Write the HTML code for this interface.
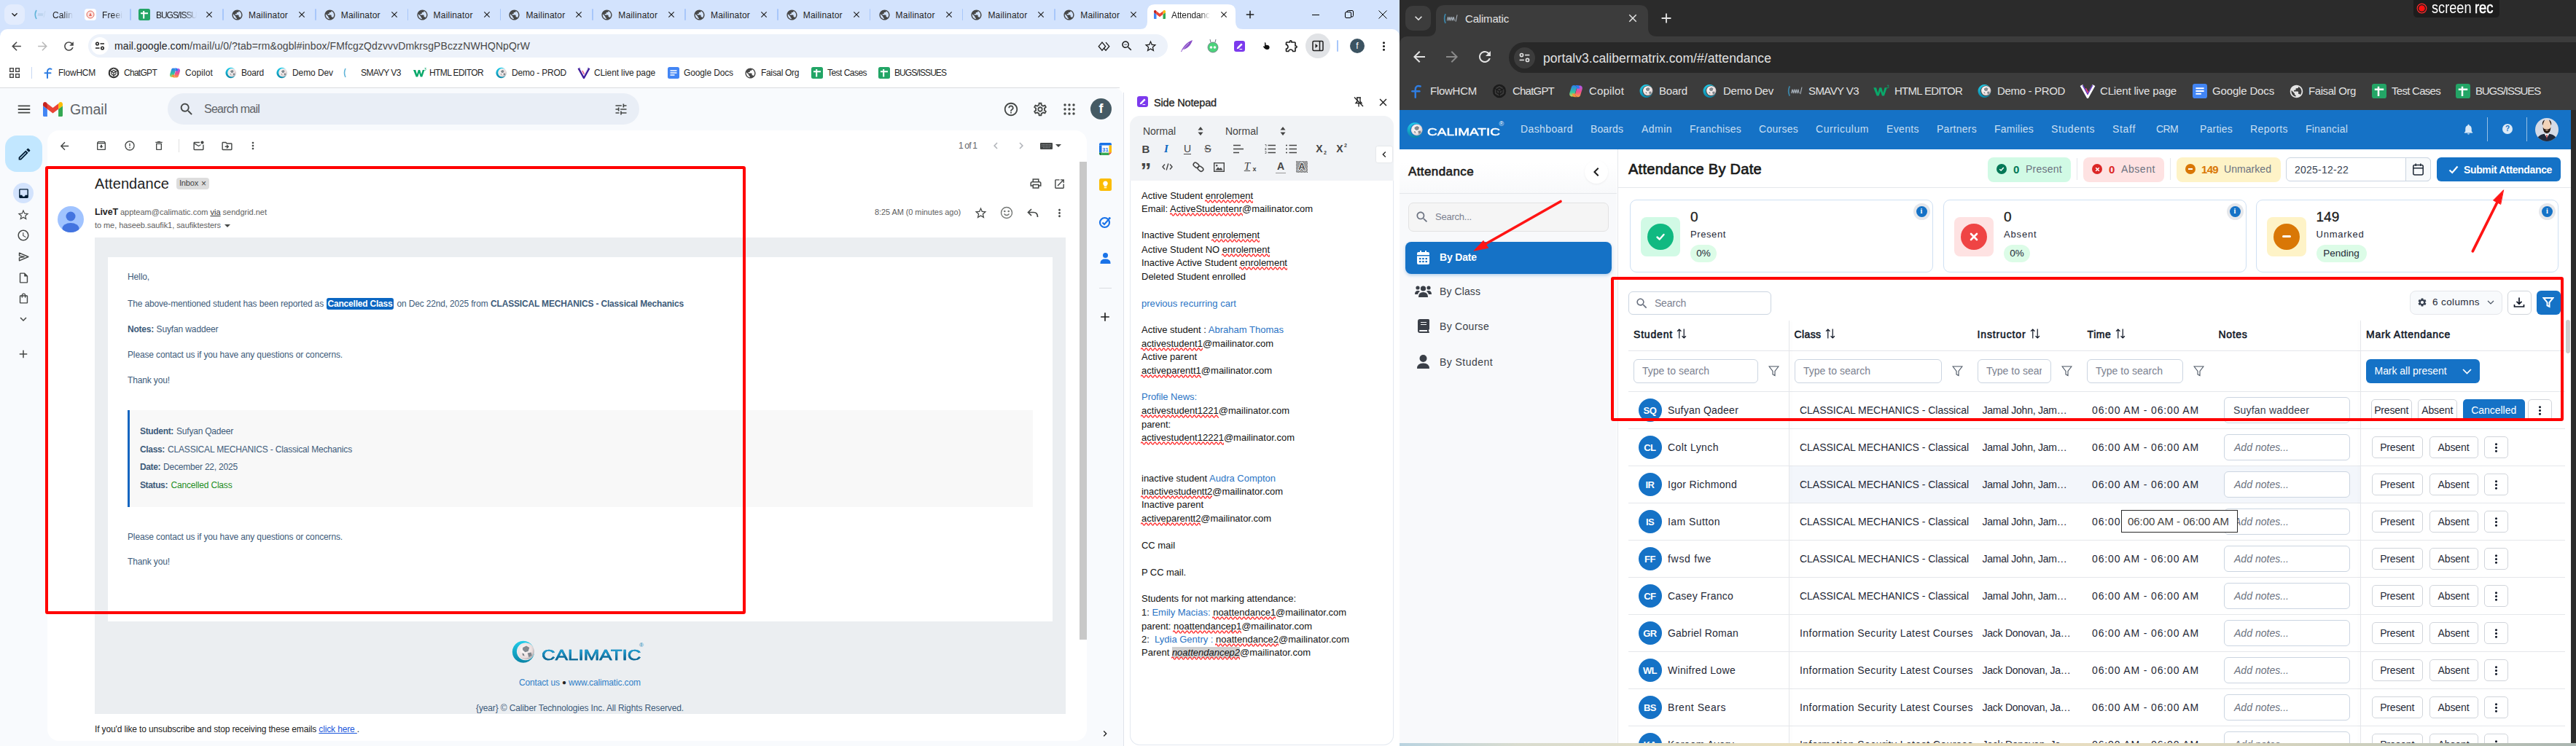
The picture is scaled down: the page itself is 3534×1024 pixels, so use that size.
<!DOCTYPE html>
<html lang="en"><head><meta charset="utf-8"><title>Attendance</title><style>html,body{margin:0;padding:0}body{width:3534px;height:1024px;overflow:hidden;position:relative;background:#fff;font-family:"Liberation Sans",sans-serif}
.t{position:absolute;white-space:pre;line-height:1}.b{position:absolute;display:block}</style></head><body>
<div class="b" style="left:0px;top:0px;width:1920px;height:52px;background:#d3e3fd;"></div>
<div class="b" style="left:6px;top:6px;width:28px;height:28px;background:#e3ecfd;border-radius:9px;"></div>
<svg class="b" style="left:12.0px;top:12.0px;" width="16" height="16" viewBox="0 0 24 24" fill="#1f1f1f"><path d="M16.59 8.59L12 13.17 7.41 8.59 6 10l6 6 6-6z"/></svg>
<svg class="b" style="left:46px;top:12px" width="18" height="16" viewBox="0 0 18 16"><path d="M4 2 Q0.5 8 4 14" stroke="#5fb4d8" stroke-width="1.6" fill="none"/><path d="M6 10 l1-4 1 4 1-4 1 4 1-4 1 4 1-4" stroke="#bcd3ee" stroke-width="1" fill="none"/><path d="M16 3 l-2 9" stroke="#c5d8ef" stroke-width="1"/></svg>
<span class="t" style="left:72.0px;top:14.8px;font-size:12px;color:#1f1f1f;letter-spacing:0.128px;-webkit-mask-image:linear-gradient(90deg,#000 55%,transparent 100%);">Calin</span>
<div class="b" style="left:116px;top:12px;width:16px;height:16px;background:#fff;border-radius:4px;"></div>
<svg class="b" style="left:118px;top:14px" width="12" height="12" viewBox="0 0 12 12"><circle cx="6" cy="6" r="5" fill="#fbe3df" stroke="#e2675a" stroke-width="1"/><path d="M4 8 L6 3.500 L8 8z" fill="#e2675a"/></svg>
<span class="t" style="left:140.0px;top:14.8px;font-size:12px;color:#1f1f1f;letter-spacing:0.131px;-webkit-mask-image:linear-gradient(90deg,#000 55%,transparent 100%);">Freei</span>
<div class="b" style="left:178.2px;top:12px;width:1.6px;height:16px;background:#a8c7fa;border-radius:1px;"></div>
<svg class="b" style="left:190.0px;top:12.0px" width="16" height="16" viewBox="0 0 16 16"><rect width="16" height="16" rx="2.500" fill="#23a566"/><path d="M3 6.200 H13 M7.200 3 V13.500" stroke="#fff" stroke-width="2"/></svg>
<span class="t" style="left:214.0px;top:14.8px;font-size:12px;color:#1f1f1f;letter-spacing:-1.040px;-webkit-mask-image:linear-gradient(90deg,#000 70%,transparent 100%);">BUGS/ISSU</span>
<svg class="b" style="left:280.0px;top:13.0px;" width="14" height="14" viewBox="0 0 24 24" fill="#1f1f1f"><path d="M19 6.41L17.59 5 12 10.59 6.41 5 5 6.41 10.59 12 5 17.59 6.41 19 12 13.41 17.59 19 19 17.59 13.41 12z"/></svg>
<div class="b" style="left:305.2px;top:12px;width:1.6px;height:16px;background:#a8c7fa;border-radius:1px;"></div>
<svg class="b" style="left:317.0px;top:11.5px;" width="17" height="17" viewBox="0 0 24 24" fill="#474747"><path d="M12 2C6.48 2 2 6.48 2 12s4.48 10 10 10 10-4.48 10-10S17.52 2 12 2zm-1 17.93c-3.95-.49-7-3.85-7-7.93 0-.62.08-1.21.21-1.79L9 15v1c0 1.1.9 2 2 2v1.93zm6.9-2.54c-.26-.81-1-1.39-1.9-1.39h-1v-3c0-.55-.45-1-1-1H8v-2h2c.55 0 1-.45 1-1V7h2c1.1 0 2-.9 2-2v-.41c2.93 1.19 5 4.06 5 7.41 0 2.08-.8 3.97-2.1 5.39z"/></svg>
<span class="t" style="left:341.0px;top:14.8px;font-size:12px;color:#1f1f1f;letter-spacing:0.197px;">Mailinator</span>
<svg class="b" style="left:407.0px;top:13.0px;" width="14" height="14" viewBox="0 0 24 24" fill="#1f1f1f"><path d="M19 6.41L17.59 5 12 10.59 6.41 5 5 6.41 10.59 12 5 17.59 6.41 19 12 13.41 17.59 19 19 17.59 13.41 12z"/></svg>
<div class="b" style="left:432.0px;top:12px;width:1.6px;height:16px;background:#a8c7fa;border-radius:1px;"></div>
<svg class="b" style="left:443.8px;top:11.5px;" width="17" height="17" viewBox="0 0 24 24" fill="#474747"><path d="M12 2C6.48 2 2 6.48 2 12s4.48 10 10 10 10-4.48 10-10S17.52 2 12 2zm-1 17.93c-3.95-.49-7-3.85-7-7.93 0-.62.08-1.21.21-1.79L9 15v1c0 1.1.9 2 2 2v1.93zm6.9-2.54c-.26-.81-1-1.39-1.9-1.39h-1v-3c0-.55-.45-1-1-1H8v-2h2c.55 0 1-.45 1-1V7h2c1.1 0 2-.9 2-2v-.41c2.93 1.19 5 4.06 5 7.41 0 2.08-.8 3.97-2.1 5.39z"/></svg>
<span class="t" style="left:467.8px;top:14.8px;font-size:12px;color:#1f1f1f;letter-spacing:0.197px;">Mailinator</span>
<svg class="b" style="left:533.8px;top:13.0px;" width="14" height="14" viewBox="0 0 24 24" fill="#1f1f1f"><path d="M19 6.41L17.59 5 12 10.59 6.41 5 5 6.41 10.59 12 5 17.59 6.41 19 12 13.41 17.59 19 19 17.59 13.41 12z"/></svg>
<div class="b" style="left:558.8000000000001px;top:12px;width:1.6px;height:16px;background:#a8c7fa;border-radius:1px;"></div>
<svg class="b" style="left:570.6px;top:11.5px;" width="17" height="17" viewBox="0 0 24 24" fill="#474747"><path d="M12 2C6.48 2 2 6.48 2 12s4.48 10 10 10 10-4.48 10-10S17.52 2 12 2zm-1 17.93c-3.95-.49-7-3.85-7-7.93 0-.62.08-1.21.21-1.79L9 15v1c0 1.1.9 2 2 2v1.93zm6.9-2.54c-.26-.81-1-1.39-1.9-1.39h-1v-3c0-.55-.45-1-1-1H8v-2h2c.55 0 1-.45 1-1V7h2c1.1 0 2-.9 2-2v-.41c2.93 1.19 5 4.06 5 7.41 0 2.08-.8 3.97-2.1 5.39z"/></svg>
<span class="t" style="left:594.6px;top:14.8px;font-size:12px;color:#1f1f1f;letter-spacing:0.197px;">Mailinator</span>
<svg class="b" style="left:660.6px;top:13.0px;" width="14" height="14" viewBox="0 0 24 24" fill="#1f1f1f"><path d="M19 6.41L17.59 5 12 10.59 6.41 5 5 6.41 10.59 12 5 17.59 6.41 19 12 13.41 17.59 19 19 17.59 13.41 12z"/></svg>
<div class="b" style="left:685.6px;top:12px;width:1.6px;height:16px;background:#a8c7fa;border-radius:1px;"></div>
<svg class="b" style="left:697.4px;top:11.5px;" width="17" height="17" viewBox="0 0 24 24" fill="#474747"><path d="M12 2C6.48 2 2 6.48 2 12s4.48 10 10 10 10-4.48 10-10S17.52 2 12 2zm-1 17.93c-3.95-.49-7-3.85-7-7.93 0-.62.08-1.21.21-1.79L9 15v1c0 1.1.9 2 2 2v1.93zm6.9-2.54c-.26-.81-1-1.39-1.9-1.39h-1v-3c0-.55-.45-1-1-1H8v-2h2c.55 0 1-.45 1-1V7h2c1.1 0 2-.9 2-2v-.41c2.93 1.19 5 4.06 5 7.41 0 2.08-.8 3.97-2.1 5.39z"/></svg>
<span class="t" style="left:721.4px;top:14.8px;font-size:12px;color:#1f1f1f;letter-spacing:0.197px;">Mailinator</span>
<svg class="b" style="left:787.4px;top:13.0px;" width="14" height="14" viewBox="0 0 24 24" fill="#1f1f1f"><path d="M19 6.41L17.59 5 12 10.59 6.41 5 5 6.41 10.59 12 5 17.59 6.41 19 12 13.41 17.59 19 19 17.59 13.41 12z"/></svg>
<div class="b" style="left:812.4000000000001px;top:12px;width:1.6px;height:16px;background:#a8c7fa;border-radius:1px;"></div>
<svg class="b" style="left:824.2px;top:11.5px;" width="17" height="17" viewBox="0 0 24 24" fill="#474747"><path d="M12 2C6.48 2 2 6.48 2 12s4.48 10 10 10 10-4.48 10-10S17.52 2 12 2zm-1 17.93c-3.95-.49-7-3.85-7-7.93 0-.62.08-1.21.21-1.79L9 15v1c0 1.1.9 2 2 2v1.93zm6.9-2.54c-.26-.81-1-1.39-1.9-1.39h-1v-3c0-.55-.45-1-1-1H8v-2h2c.55 0 1-.45 1-1V7h2c1.1 0 2-.9 2-2v-.41c2.93 1.19 5 4.06 5 7.41 0 2.08-.8 3.97-2.1 5.39z"/></svg>
<span class="t" style="left:848.2px;top:14.8px;font-size:12px;color:#1f1f1f;letter-spacing:0.197px;">Mailinator</span>
<svg class="b" style="left:914.2px;top:13.0px;" width="14" height="14" viewBox="0 0 24 24" fill="#1f1f1f"><path d="M19 6.41L17.59 5 12 10.59 6.41 5 5 6.41 10.59 12 5 17.59 6.41 19 12 13.41 17.59 19 19 17.59 13.41 12z"/></svg>
<div class="b" style="left:939.2px;top:12px;width:1.6px;height:16px;background:#a8c7fa;border-radius:1px;"></div>
<svg class="b" style="left:951.0px;top:11.5px;" width="17" height="17" viewBox="0 0 24 24" fill="#474747"><path d="M12 2C6.48 2 2 6.48 2 12s4.48 10 10 10 10-4.48 10-10S17.52 2 12 2zm-1 17.93c-3.95-.49-7-3.85-7-7.93 0-.62.08-1.21.21-1.79L9 15v1c0 1.1.9 2 2 2v1.93zm6.9-2.54c-.26-.81-1-1.39-1.9-1.39h-1v-3c0-.55-.45-1-1-1H8v-2h2c.55 0 1-.45 1-1V7h2c1.1 0 2-.9 2-2v-.41c2.93 1.19 5 4.06 5 7.41 0 2.08-.8 3.97-2.1 5.39z"/></svg>
<span class="t" style="left:975.0px;top:14.8px;font-size:12px;color:#1f1f1f;letter-spacing:0.197px;">Mailinator</span>
<svg class="b" style="left:1041.0px;top:13.0px;" width="14" height="14" viewBox="0 0 24 24" fill="#1f1f1f"><path d="M19 6.41L17.59 5 12 10.59 6.41 5 5 6.41 10.59 12 5 17.59 6.41 19 12 13.41 17.59 19 19 17.59 13.41 12z"/></svg>
<div class="b" style="left:1066.0px;top:12px;width:1.6px;height:16px;background:#a8c7fa;border-radius:1px;"></div>
<svg class="b" style="left:1077.8px;top:11.5px;" width="17" height="17" viewBox="0 0 24 24" fill="#474747"><path d="M12 2C6.48 2 2 6.48 2 12s4.48 10 10 10 10-4.48 10-10S17.52 2 12 2zm-1 17.93c-3.95-.49-7-3.85-7-7.93 0-.62.08-1.21.21-1.79L9 15v1c0 1.1.9 2 2 2v1.93zm6.9-2.54c-.26-.81-1-1.39-1.9-1.39h-1v-3c0-.55-.45-1-1-1H8v-2h2c.55 0 1-.45 1-1V7h2c1.1 0 2-.9 2-2v-.41c2.93 1.19 5 4.06 5 7.41 0 2.08-.8 3.97-2.1 5.39z"/></svg>
<span class="t" style="left:1101.8px;top:14.8px;font-size:12px;color:#1f1f1f;letter-spacing:0.197px;">Mailinator</span>
<svg class="b" style="left:1167.8px;top:13.0px;" width="14" height="14" viewBox="0 0 24 24" fill="#1f1f1f"><path d="M19 6.41L17.59 5 12 10.59 6.41 5 5 6.41 10.59 12 5 17.59 6.41 19 12 13.41 17.59 19 19 17.59 13.41 12z"/></svg>
<div class="b" style="left:1192.8px;top:12px;width:1.6px;height:16px;background:#a8c7fa;border-radius:1px;"></div>
<svg class="b" style="left:1204.6px;top:11.5px;" width="17" height="17" viewBox="0 0 24 24" fill="#474747"><path d="M12 2C6.48 2 2 6.48 2 12s4.48 10 10 10 10-4.48 10-10S17.52 2 12 2zm-1 17.93c-3.95-.49-7-3.85-7-7.93 0-.62.08-1.21.21-1.79L9 15v1c0 1.1.9 2 2 2v1.93zm6.9-2.54c-.26-.81-1-1.39-1.9-1.39h-1v-3c0-.55-.45-1-1-1H8v-2h2c.55 0 1-.45 1-1V7h2c1.1 0 2-.9 2-2v-.41c2.93 1.19 5 4.06 5 7.41 0 2.08-.8 3.97-2.1 5.39z"/></svg>
<span class="t" style="left:1228.6px;top:14.8px;font-size:12px;color:#1f1f1f;letter-spacing:0.197px;">Mailinator</span>
<svg class="b" style="left:1294.6px;top:13.0px;" width="14" height="14" viewBox="0 0 24 24" fill="#1f1f1f"><path d="M19 6.41L17.59 5 12 10.59 6.41 5 5 6.41 10.59 12 5 17.59 6.41 19 12 13.41 17.59 19 19 17.59 13.41 12z"/></svg>
<div class="b" style="left:1319.6000000000001px;top:12px;width:1.6px;height:16px;background:#a8c7fa;border-radius:1px;"></div>
<svg class="b" style="left:1331.4px;top:11.5px;" width="17" height="17" viewBox="0 0 24 24" fill="#474747"><path d="M12 2C6.48 2 2 6.48 2 12s4.48 10 10 10 10-4.48 10-10S17.52 2 12 2zm-1 17.93c-3.95-.49-7-3.85-7-7.93 0-.62.08-1.21.21-1.79L9 15v1c0 1.1.9 2 2 2v1.93zm6.9-2.54c-.26-.81-1-1.39-1.9-1.39h-1v-3c0-.55-.45-1-1-1H8v-2h2c.55 0 1-.45 1-1V7h2c1.1 0 2-.9 2-2v-.41c2.93 1.19 5 4.06 5 7.41 0 2.08-.8 3.97-2.1 5.39z"/></svg>
<span class="t" style="left:1355.4px;top:14.8px;font-size:12px;color:#1f1f1f;letter-spacing:0.197px;">Mailinator</span>
<svg class="b" style="left:1421.4px;top:13.0px;" width="14" height="14" viewBox="0 0 24 24" fill="#1f1f1f"><path d="M19 6.41L17.59 5 12 10.59 6.41 5 5 6.41 10.59 12 5 17.59 6.41 19 12 13.41 17.59 19 19 17.59 13.41 12z"/></svg>
<div class="b" style="left:1446.4px;top:12px;width:1.6px;height:16px;background:#a8c7fa;border-radius:1px;"></div>
<svg class="b" style="left:1458.2px;top:11.5px;" width="17" height="17" viewBox="0 0 24 24" fill="#474747"><path d="M12 2C6.48 2 2 6.48 2 12s4.48 10 10 10 10-4.48 10-10S17.52 2 12 2zm-1 17.93c-3.95-.49-7-3.85-7-7.93 0-.62.08-1.21.21-1.79L9 15v1c0 1.1.9 2 2 2v1.93zm6.9-2.54c-.26-.81-1-1.39-1.9-1.39h-1v-3c0-.55-.45-1-1-1H8v-2h2c.55 0 1-.45 1-1V7h2c1.1 0 2-.9 2-2v-.41c2.93 1.19 5 4.06 5 7.41 0 2.08-.8 3.97-2.1 5.39z"/></svg>
<span class="t" style="left:1482.2px;top:14.8px;font-size:12px;color:#1f1f1f;letter-spacing:0.197px;">Mailinator</span>
<svg class="b" style="left:1548.2px;top:13.0px;" width="14" height="14" viewBox="0 0 24 24" fill="#1f1f1f"><path d="M19 6.41L17.59 5 12 10.59 6.41 5 5 6.41 10.59 12 5 17.59 6.41 19 12 13.41 17.59 19 19 17.59 13.41 12z"/></svg>
<svg class="b" style="left:1564px;top:6px" width="142" height="34" viewBox="0 0 142 34"><path d="M0 34 Q10 34 10 24 V10 Q10 0 20 0 H121 Q131 0 131 10 V24 Q131 34 141 34 Z" fill="#fff"/></svg>
<svg class="b" style="left:1583.0px;top:14.0px" width="16" height="12.0" viewBox="0 0 32 24"><path d="M2 24h5V11.500L0 6.200V22c0 1.100.9 2 2 2z" fill="#4285f4"/><path d="M25 24h5c1.100 0 2-.9 2-2V6.200l-7 5.300z" fill="#34a853"/><path d="M25 2.700v8.800l7-5.300V3.300c0-2.700-3.100-4.200-5.200-2.600z" fill="#fbbc04"/><path d="M7 11.500V2.700l9 6.800 9-6.800v8.800l-9 6.800z" fill="#ea4335"/><path d="M0 3.300v2.900l7 5.300V2.700L5.200.7C3.100-.9 0 .6 0 3.300z" fill="#c5221f"/></svg>
<span class="t" style="left:1607.0px;top:14.8px;font-size:12px;color:#1f1f1f;letter-spacing:-0.116px;-webkit-mask-image:linear-gradient(90deg,#000 75%,transparent 100%);">Attendanc</span>
<svg class="b" style="left:1672.0px;top:13.0px;" width="14" height="14" viewBox="0 0 24 24" fill="#1f1f1f"><path d="M19 6.41L17.59 5 12 10.59 6.41 5 5 6.41 10.59 12 5 17.59 6.41 19 12 13.41 17.59 19 19 17.59 13.41 12z"/></svg>
<svg class="b" style="left:1706.0px;top:11.0px;" width="18" height="18" viewBox="0 0 24 24" fill="#1f1f1f"><path d="M19 13h-6v6h-2v-6H5v-2h6V5h2v6h6v2z"/></svg>
<div class="b" style="left:1800px;top:19.5px;width:10px;height:1px;background:#000;"></div>
<svg class="b" style="left:1845px;top:14px" width="12" height="12" viewBox="0 0 12 12" fill="none" stroke="#000" stroke-width="1"><rect x="0.5" y="2.5" width="8" height="8" rx="1.500"/><path d="M3 2.500 V2 Q3 0.500 4.500 0.500 H10 Q11.500 0.500 11.500 2 V7.500 Q11.500 9 10 9 H9"/></svg>
<svg class="b" style="left:1891px;top:14px" width="12" height="12" viewBox="0 0 12 12" fill="none" stroke="#000" stroke-width="1"><path d="M0.500 0.500 L11.500 11.500 M11.500 0.500 L0.500 11.500"/></svg>
<div class="b" style="left:0px;top:40px;width:1920px;height:47px;background:#fff;border-radius:10px 10px 0 0;"></div>
<svg class="b" style="left:12.5px;top:53.5px;" width="19" height="19" viewBox="0 0 24 24" fill="#474747"><path d="M20 11H7.83l5.59-5.59L12 4l-8 8 8 8 1.41-1.41L7.83 13H20v-2z"/></svg>
<svg class="b" style="left:48.5px;top:53.5px;" width="19" height="19" viewBox="0 0 24 24" fill="#b9b9b9"><path d="M12 4l-1.41 1.41L16.17 11H4v2h12.17l-5.58 5.59L12 20l8-8z"/></svg>
<svg class="b" style="left:84.5px;top:53.5px;" width="19" height="19" viewBox="0 0 24 24" fill="#474747"><path d="M17.65 6.35C16.2 4.9 14.21 4 12 4c-4.42 0-7.99 3.58-7.99 8s3.57 8 7.99 8c3.73 0 6.84-2.55 7.73-6h-2.08c-.82 2.33-3.04 4-5.65 4-3.31 0-6-2.69-6-6s2.69-6 6-6c1.66 0 3.14.69 4.22 1.78L13 11h7V4l-2.35 2.35z"/></svg>
<div class="b" style="left:121px;top:47px;width:1481px;height:32px;background:#edf2fa;border-radius:16px;"></div>
<div class="b" style="left:125px;top:51px;width:24px;height:24px;background:#fff;border-radius:12px;"></div>
<svg class="b" style="left:130px;top:56px" width="14" height="14" viewBox="0 0 14 14" fill="none" stroke="#1f1f1f" stroke-width="1.500"><circle cx="3.500" cy="4" r="1.800"/><path d="M7.500 4 H13"/><circle cx="10.500" cy="10" r="1.800"/><path d="M1 10 H6.500"/></svg>
<span class="t" style="left:157.0px;top:56.1px;font-size:14px;color:#474747;letter-spacing:0.094px;"><span style="color:#1f1f1f">mail.google.com</span>/mail/u/0/?tab=rm&amp;ogbl#inbox/FMfcgzQdzvvvDmkrsgPBczzNWHQNpQrW</span>
<svg class="b" style="left:1505.500px;top:55.500px" width="17" height="15.300" viewBox="0 0 20 18" fill="none" stroke="#1f1f1f" stroke-width="1.600"><path d="M7 2.500 L1.500 9 L7 15.500 L12.500 9z"/><path d="M13 2.500 L18.500 9 L13 15.500 L10 12"/></svg>
<svg class="b" style="left:1537.0px;top:54.0px;" width="18" height="18" viewBox="0 0 24 24" fill="#1f1f1f"><path d="M15.5 14h-.79l-.28-.27C15.410 12.590 16 11.110 16 9.500 16 5.910 13.090 3 9.500 3S3 5.910 3 9.500 5.910 16 9.500 16c1.610 0 3.090-.590 4.230-1.570l.270.280v.790l5 4.990L20.490 19l-4.990-5zm-6 0C7.010 14 5 11.990 5 9.500S7.010 5 9.500 5 14 7.010 14 9.500 11.990 14 9.500 14zM7 9h5v1H7z"/></svg>
<svg class="b" style="left:1568.5px;top:53.5px;" width="19" height="19" viewBox="0 0 24 24" fill="#1f1f1f"><path d="M22 9.24l-7.19-.62L12 2 9.19 8.63 2 9.24l5.46 4.73L5.82 21 12 17.27 18.18 21l-1.63-7.03L22 9.24zM12 15.4l-3.76 2.27 1-4.28-3.32-2.88 4.38-.38L12 6.1l1.71 4.04 4.38.38-3.32 2.88 1 4.28L12 15.4z"/></svg>
<svg class="b" style="left:1619px;top:54px" width="18" height="18" viewBox="0 0 18 18"><path d="M1 17 C4 10 9 4 17 1 C15 8 10 13 4 14 L2 17z" fill="#8a4fc7"/><path d="M2 16 L12 5" stroke="#d8c2f0" stroke-width=".8"/></svg>
<svg class="b" style="left:1655px;top:53px" width="18" height="20" viewBox="0 0 18 20"><circle cx="9" cy="12" r="7" fill="#4bd37b" stroke="#6b7280" stroke-width=".8"/><circle cx="6.500" cy="12" r="1.800" fill="#fff"/><circle cx="11.500" cy="12" r="1.800" fill="#fff"/><path d="M6 5 L5 1 M12 5 L13 1" stroke="#6b7280" stroke-width="1"/></svg>
<svg class="b" style="left:1692.5px;top:55.5px" width="15" height="15" viewBox="0 0 16 16"><rect width="16" height="16" rx="3.500" fill="#7c3aed"/><path d="M4 12 L4.600 9.500 L10.500 3.600 L12.400 5.500 L6.500 11.400z" fill="#fff"/><path d="M8 12.300 H12" stroke="#fff" stroke-width="1.200"/></svg>
<div class="b" style="left:1728px;top:54px;width:18px;height:18px;background:#fff;border-radius:9px;"></div>
<svg class="b" style="left:1732px;top:57px" width="11" height="12" viewBox="0 0 11 12"><path d="M3 1 C4 1 4.500 2 4.500 3 V5 C6 4.500 9 5 9.500 7 C10 9 9 11 6.500 11 C4 11 2 9 1 7 C1 6 2.500 6 3 7 Z" fill="#111"/></svg>
<svg class="b" style="left:1762.0px;top:53.0px;" width="20" height="20" viewBox="0 0 24 24" fill="#1f1f1f"><path d="M10.5 4.5c.28 0 .5.22.5.5v2h6v6h2c.28 0 .5.22.5.5s-.22.5-.5.5h-2v6h-2.120c-.680-1.750-2.390-3-4.380-3s-3.700 1.250-4.380 3H4v-2.120c1.750-.680 3-2.390 3-4.380 0-1.990-1.240-3.700-2.990-4.380L4 7h6V5c0-.280.220-.500.500-.500m0-2C9.120 2.500 8 3.620 8 5H4c-1.100 0-1.990.9-1.990 2v3.800h.290c1.490 0 2.700 1.210 2.700 2.700s-1.210 2.700-2.700 2.700H2V20c0 1.100.9 2 2 2h3.800v-.300c0-1.490 1.210-2.700 2.700-2.700s2.700 1.210 2.700 2.700v.300H17c1.100 0 2-.9 2-2v-4c1.380 0 2.500-1.120 2.500-2.500S20.380 11 19 11V7c0-1.100-.9-2-2-2h-4c0-1.380-1.120-2.500-2.500-2.500z"/></svg>
<div class="b" style="left:1791px;top:46px;width:34px;height:34px;background:#e1e3e6;border-radius:17px;"></div>
<svg class="b" style="left:1800px;top:55px" width="16" height="16" viewBox="0 0 16 16" fill="none" stroke="#1f1f1f" stroke-width="1.500"><rect x="1" y="1.500" width="14" height="13" rx="1.500"/><path d="M10.500 1.500 V14.500"/><path d="M4.500 5 L8 8 L4.500 11z" fill="#1f1f1f" stroke="none"/></svg>
<div class="b" style="left:1834.2px;top:55px;width:1.6px;height:16px;background:#a8c7fa;border-radius:1px;"></div>
<div class="b" style="left:1852px;top:53px;width:20px;height:20px;background:#3b5361;border-radius:10px;"></div>
<span class="t" style="left:1860.3px;top:57.1px;font-size:12px;color:#fff;">f</span>
<svg class="b" style="left:1888.5px;top:53.5px;" width="19" height="19" viewBox="0 0 24 24" fill="#1f1f1f"><path d="M12 8c1.1 0 2-.9 2-2s-.9-2-2-2-2 .9-2 2 .9 2 2 2zm0 2c-1.1 0-2 .9-2 2s.9 2 2 2 2-.9 2-2-.9-2-2-2zm0 6c-1.1 0-2 .9-2 2s.9 2 2 2 2-.9 2-2-.9-2-2-2z"/></svg>
<div class="b" style="left:0px;top:87px;width:1920px;height:33px;background:#fff;"></div>
<div class="b" style="left:0px;top:120px;width:1536px;height:1px;background:#dadce0;"></div>
<svg class="b" style="left:13px;top:93px" width="14" height="14" viewBox="0 0 14 14" fill="none" stroke="#444" stroke-width="1.400"><rect x=".7" y=".7" width="4.600" height="4.600"/><rect x="8.700" y=".7" width="4.600" height="4.600"/><rect x=".7" y="8.700" width="4.600" height="4.600"/><rect x="8.700" y="8.700" width="4.600" height="4.600"/></svg>
<div class="b" style="left:42.5px;top:92px;width:1.3px;height:16px;background:#c7d7f3;"></div>
<svg class="b" style="left:58.0px;top:92.0px" width="16" height="16" viewBox="0 0 16 16" fill="none" stroke="#2f7de1" stroke-width="2" stroke-linecap="round"><path d="M12.500 2.800 C9.500 1.500 7 3 7 6.500 V15"/><path d="M3.500 8.200 H11.500"/></svg>
<span class="t" style="left:80.0px;top:94.1px;font-size:12px;color:#1f1f1f;letter-spacing:-0.239px;">FlowHCM</span>
<svg class="b" style="left:148.0px;top:92.0px" width="16" height="16" viewBox="0 0 16 16" fill="none" stroke="#2b2b2b" stroke-width="1.100"><circle cx="8" cy="8" r="6.800"/><path d="M8 1.500 L13.500 4.800 V11.200 L8 14.500 L2.500 11.200 V4.800z"/><path d="M8 4.500 L11 6.300 V9.700 L8 11.500 L5 9.700 V6.300z"/><path d="M2.500 4.800 L8 8 M13.500 4.800 L8 8 M8 14.500 V8"/></svg>
<span class="t" style="left:170.0px;top:94.1px;font-size:12px;color:#1f1f1f;letter-spacing:-0.717px;">ChatGPT</span>
<svg class="b" style="left:232.0px;top:92.0px" width="16" height="16" viewBox="0 0 16 16"><defs><linearGradient id="cpa240" x1="0" y1="0" x2="0" y2="1"><stop offset="0" stop-color="#2b7df0"/><stop offset=".6" stop-color="#33c1a0"/><stop offset="1" stop-color="#d3d84a"/></linearGradient><linearGradient id="cpb240" x1="0" y1="0" x2="0" y2="1"><stop offset="0" stop-color="#a45cf5"/><stop offset=".55" stop-color="#f0508a"/><stop offset="1" stop-color="#f9a040"/></linearGradient></defs><path d="M5.500 1.500 c-1.200 0-2 .800-2.400 2 l-2 6.500 c-.600 2 .400 4 2.400 4 h2.500 l3-9.800 c-.400-1.500-1.200-2.700-3.500-2.700z" fill="url(#cpa240)"/><path d="M10.500 14.500 c1.200 0 2-.800 2.400-2 l2-6.500 c.600-2-.400-4-2.400-4 h-2.500 l-3 9.800 c.400 1.500 1.200 2.700 3.500 2.700z" fill="url(#cpb240)"/><path d="M5.500 1.500 h4 c1.200 0 1.800 .700 2.100 1.700 l.600 2 h-3 l-.600-2 c-.300-1-.900-1.700-3.100-1.700z" fill="#2b7df0"/><path d="M10.500 14.500 h-4 c-1.200 0-1.800-.700-2.100-1.700 l-.600-2 h3 l.600 2 c.300 1 .900 1.700 3.100 1.700z" fill="#f7903c"/></svg>
<span class="t" style="left:254.0px;top:94.1px;font-size:12px;color:#1f1f1f;letter-spacing:0.092px;">Copilot</span>
<svg class="b" style="left:308.5px;top:92.0px" width="16" height="16" viewBox="0 0 20 20"><defs><linearGradient id="cgc9" x1="0" y1="0" x2="0" y2="1"><stop offset="0" stop-color="#22cdea"/><stop offset="1" stop-color="#0a84a6"/></linearGradient><radialGradient id="cgs9" cx=".4" cy=".4" r=".7"><stop offset="0" stop-color="#ffffff"/><stop offset=".7" stop-color="#e9dcdc"/><stop offset="1" stop-color="#8d9399"/></radialGradient></defs><path fill-rule="evenodd" d="M9.500 1 a9 9 0 1 0 0.001 0z M11.300 2.500 a7.200 7.200 0 1 1 -0.001 0z" fill="url(#cgc9)"/><path d="M13 1.800 A9 9 0 0 1 18.400 8 L20 10 L18.400 13 A9 9 0 0 1 15 17.200 L20 20 L20 0z" fill="none"/><circle cx="11.700" cy="9.600" r="6.700" fill="url(#cgs9)"/><path d="M9 6.500 l3-1.500 2.500 1.500 -1 3 -2.500 .800 -2-1.800z M13 11 l3-.500 .500 2.500 -2.500 1.500z M8.500 11 l1.500 .500 .500 2 -1.500-.500z" fill="#6d747b" opacity=".85"/></svg>
<span class="t" style="left:331.0px;top:94.1px;font-size:12px;color:#1f1f1f;letter-spacing:-0.206px;">Board</span>
<svg class="b" style="left:378.5px;top:92.0px" width="16" height="16" viewBox="0 0 20 20"><defs><linearGradient id="cgc10" x1="0" y1="0" x2="0" y2="1"><stop offset="0" stop-color="#22cdea"/><stop offset="1" stop-color="#0a84a6"/></linearGradient><radialGradient id="cgs10" cx=".4" cy=".4" r=".7"><stop offset="0" stop-color="#ffffff"/><stop offset=".7" stop-color="#e9dcdc"/><stop offset="1" stop-color="#8d9399"/></radialGradient></defs><path fill-rule="evenodd" d="M9.500 1 a9 9 0 1 0 0.001 0z M11.300 2.500 a7.200 7.200 0 1 1 -0.001 0z" fill="url(#cgc10)"/><path d="M13 1.800 A9 9 0 0 1 18.400 8 L20 10 L18.400 13 A9 9 0 0 1 15 17.200 L20 20 L20 0z" fill="none"/><circle cx="11.700" cy="9.600" r="6.700" fill="url(#cgs10)"/><path d="M9 6.500 l3-1.500 2.500 1.500 -1 3 -2.500 .800 -2-1.800z M13 11 l3-.500 .500 2.500 -2.500 1.500z M8.500 11 l1.500 .500 .500 2 -1.500-.500z" fill="#6d747b" opacity=".85"/></svg>
<span class="t" style="left:401.0px;top:94.1px;font-size:12px;color:#1f1f1f;letter-spacing:-0.086px;">Demo Dev</span>
<svg class="b" style="left:467.0px;top:92.0px" width="16" height="16" viewBox="0 0 16 16"><path d="M7 2 Q4 8 7 14" stroke="#5fb4d8" stroke-width="1.600" fill="none"/></svg>
<span class="t" style="left:495.0px;top:94.1px;font-size:12px;color:#1f1f1f;letter-spacing:-0.490px;">SMAVY V3</span>
<svg class="b" style="left:566.0px;top:92.0px" width="20" height="16" viewBox="0 0 20 16"><path d="M1 4 H4.200 L6 10 L7.800 4 H10.200 L12 10 L13.800 4 H16.500 L13.300 13.500 H10.800 L9 8 L7.200 13.500 H4.700z" fill="#0aa86a"/><path d="M16.500 1.500 h2 l-1 1.200 c1.200 0 1.200 1.800-.2 1.800 c-.6 0-1-.3-1.100-.7" stroke="#0aa86a" stroke-width=".7" fill="none"/></svg>
<span class="t" style="left:589.0px;top:94.1px;font-size:12px;color:#1f1f1f;letter-spacing:-0.607px;">HTML EDITOR</span>
<svg class="b" style="left:679.5px;top:92.0px" width="16" height="16" viewBox="0 0 20 20"><defs><linearGradient id="cgc11" x1="0" y1="0" x2="0" y2="1"><stop offset="0" stop-color="#22cdea"/><stop offset="1" stop-color="#0a84a6"/></linearGradient><radialGradient id="cgs11" cx=".4" cy=".4" r=".7"><stop offset="0" stop-color="#ffffff"/><stop offset=".7" stop-color="#e9dcdc"/><stop offset="1" stop-color="#8d9399"/></radialGradient></defs><path fill-rule="evenodd" d="M9.500 1 a9 9 0 1 0 0.001 0z M11.300 2.500 a7.200 7.200 0 1 1 -0.001 0z" fill="url(#cgc11)"/><path d="M13 1.800 A9 9 0 0 1 18.400 8 L20 10 L18.400 13 A9 9 0 0 1 15 17.200 L20 20 L20 0z" fill="none"/><circle cx="11.700" cy="9.600" r="6.700" fill="url(#cgs11)"/><path d="M9 6.500 l3-1.500 2.500 1.500 -1 3 -2.500 .800 -2-1.800z M13 11 l3-.500 .500 2.500 -2.500 1.500z M8.500 11 l1.500 .500 .500 2 -1.500-.500z" fill="#6d747b" opacity=".85"/></svg>
<span class="t" style="left:702.0px;top:94.1px;font-size:12px;color:#1f1f1f;letter-spacing:-0.213px;">Demo - PROD</span>
<svg class="b" style="left:791.5px;top:92.0px" width="18" height="16" viewBox="0 0 18 16" fill="none"><path d="M2 1.500 L9 14 L16 1.500" stroke="#3f1d9b" stroke-width="3.400" stroke-linejoin="miter"/><path d="M3.500 1.500 L9 11.500 L14.500 1.500" stroke="#ffffff" stroke-width="1.100"/><path d="M7 5 L9.500 10" stroke="#ec407a" stroke-width="1.200"/></svg>
<span class="t" style="left:815.0px;top:94.1px;font-size:12px;color:#1f1f1f;letter-spacing:-0.129px;">CLient live page</span>
<svg class="b" style="left:916.0px;top:92.0px" width="16" height="16" viewBox="0 0 16 16"><rect width="16" height="16" rx="2.500" fill="#4285f4"/><path d="M3.500 5 H12.500 M3.500 8 H12.500 M3.500 11 H9.500" stroke="#fff" stroke-width="1.700"/></svg>
<span class="t" style="left:938.0px;top:94.1px;font-size:12px;color:#1f1f1f;letter-spacing:-0.125px;">Google Docs</span>
<svg class="b" style="left:1021.0px;top:91.5px" width="17" height="17" viewBox="0 0 24 24" fill="#474747"><path d="M12 2C6.48 2 2 6.48 2 12s4.48 10 10 10 10-4.48 10-10S17.52 2 12 2zm-1 17.93c-3.95-.49-7-3.85-7-7.93 0-.62.08-1.21.21-1.79L9 15v1c0 1.1.9 2 2 2v1.93zm6.9-2.54c-.26-.81-1-1.39-1.9-1.39h-1v-3c0-.55-.45-1-1-1H8v-2h2c.55 0 1-.45 1-1V7h2c1.1 0 2-.9 2-2v-.41c2.93 1.19 5 4.06 5 7.41 0 2.08-.8 3.97-2.1 5.39z"/></svg>
<span class="t" style="left:1044.0px;top:94.1px;font-size:12px;color:#1f1f1f;letter-spacing:-0.336px;">Faisal Org</span>
<svg class="b" style="left:1113.0px;top:92.0px" width="16" height="16" viewBox="0 0 16 16"><rect width="16" height="16" rx="2.500" fill="#23a566"/><path d="M3 6.200 H13 M7.200 3 V13.500" stroke="#fff" stroke-width="2"/></svg>
<span class="t" style="left:1135.0px;top:94.1px;font-size:12px;color:#1f1f1f;letter-spacing:-0.536px;">Test Cases</span>
<svg class="b" style="left:1205.0px;top:92.0px" width="16" height="16" viewBox="0 0 16 16"><rect width="16" height="16" rx="2.500" fill="#23a566"/><path d="M3 6.200 H13 M7.200 3 V13.500" stroke="#fff" stroke-width="2"/></svg>
<span class="t" style="left:1227.0px;top:94.1px;font-size:12px;color:#1f1f1f;letter-spacing:-0.942px;">BUGS/ISSUES</span>
<div class="b" style="left:0px;top:121px;width:1541px;height:903px;background:#f8fafd;border-radius:0 12px 0 0;"></div>
<div class="b" style="left:1541px;top:127px;width:1px;height:897px;background:#dfe3eb;"></div>
<div class="b" style="left:1542px;top:121px;width:378px;height:903px;background:#fff;"></div>
<svg class="b" style="left:21.5px;top:139.0px;" width="22" height="22" viewBox="0 0 24 24" fill="#444746"><path d="M3 18h18v-2H3v2zm0-5h18v-2H3v2zm0-7v2h18V6H3z"/></svg>
<svg class="b" style="left:59.0px;top:139.9px" width="27" height="20.25" viewBox="0 0 32 24"><path d="M2 24h5V11.500L0 6.200V22c0 1.100.9 2 2 2z" fill="#4285f4"/><path d="M25 24h5c1.100 0 2-.9 2-2V6.200l-7 5.300z" fill="#34a853"/><path d="M25 2.700v8.800l7-5.300V3.300c0-2.700-3.100-4.200-5.200-2.600z" fill="#fbbc04"/><path d="M7 11.500V2.700l9 6.800 9-6.800v8.800l-9 6.800z" fill="#ea4335"/><path d="M0 3.300v2.900l7 5.300V2.700L5.200.7C3.100-.9 0 .6 0 3.300z" fill="#c5221f"/></svg>
<span class="t" style="left:96.0px;top:140.7px;font-size:19.5px;color:#5f6368;letter-spacing:0.016px;">Gmail</span>
<div class="b" style="left:230px;top:128px;width:647px;height:43px;background:#e9eef6;border-radius:22px;"></div>
<svg class="b" style="left:244.5px;top:138.5px;" width="22" height="22" viewBox="0 0 24 24" fill="#444746"><path d="M15.5 14h-.79l-.28-.27C15.41 12.59 16 11.11 16 9.5 16 5.91 13.09 3 9.5 3S3 5.91 3 9.5 5.91 16 9.5 16c1.61 0 3.09-.59 4.23-1.57l.27.28v.79l5 4.99L20.49 19l-4.99-5zm-6 0C7.01 14 5 11.99 5 9.5S7.01 5 9.5 5 14 7.01 14 9.5 11.99 14 9.5 14z"/></svg>
<span class="t" style="left:280.0px;top:142.0px;font-size:16px;color:#5f6368;letter-spacing:-0.771px;">Search mail</span>
<svg class="b" style="left:842.0px;top:139.5px;" width="20" height="20" viewBox="0 0 24 24" fill="#444746"><path d="M3 17v2h6v-2H3zM3 5v2h10V5H3zm10 16v-2h8v-2h-8v-2h-2v6h2zM7 9v2H3v2h4v2h2V9H7zm14 4v-2H11v2h10zm-6-4h2V7h4V5h-4V3h-2v6z"/></svg>
<svg class="b" style="left:1376.0px;top:139.0px;" width="22" height="22" viewBox="0 0 24 24" fill="#444746"><path d="M11 18h2v-2h-2v2zm1-16C6.48 2 2 6.48 2 12s4.48 10 10 10 10-4.48 10-10S17.52 2 12 2zm0 18c-4.41 0-8-3.59-8-8s3.59-8 8-8 8 3.59 8 8-3.59 8-8 8zm0-14c-2.21 0-4 1.79-4 4h2c0-1.1.9-2 2-2s2 .9 2 2c0 2-3 1.75-3 5h2c0-2.25 3-2.5 3-5 0-2.21-1.79-4-4-4z"/></svg>
<svg class="b" style="left:1416.0px;top:139.0px;" width="22" height="22" viewBox="0 0 24 24" fill="#444746"><path d="M19.43 12.98c.04-.32.07-.64.07-.98 0-.34-.03-.66-.07-.98l2.11-1.65c.19-.15.24-.42.12-.64l-2-3.46c-.09-.16-.26-.25-.44-.25-.06 0-.12.01-.17.03l-2.49 1c-.52-.4-1.08-.73-1.69-.98l-.38-2.65C14.46 2.18 14.25 2 14 2h-4c-.25 0-.46.18-.49.42l-.38 2.65c-.61.25-1.17.59-1.69.98l-2.49-1c-.06-.02-.12-.03-.18-.03-.17 0-.34.09-.43.25l-2 3.46c-.13.22-.07.49.12.64l2.11 1.65c-.04.32-.07.65-.07.98 0 .33.03.66.07.98l-2.11 1.65c-.19.15-.24.42-.12.64l2 3.46c.09.16.26.25.44.25.06 0 .12-.01.17-.03l2.49-1c.52.4 1.08.73 1.69.98l.38 2.65c.03.24.24.42.49.42h4c.25 0 .46-.18.49-.42l.38-2.65c.61-.25 1.17-.59 1.69-.98l2.49 1c.06.02.12.03.18.03.17 0 .34-.09.43-.25l2-3.46c.12-.22.07-.49-.12-.64l-2.11-1.65zm-1.98-1.71c.04.31.05.52.05.73 0 .21-.02.43-.05.73l-.14 1.13.89.7 1.08.84-.7 1.21-1.27-.51-1.04-.42-.9.68c-.43.32-.84.56-1.25.73l-1.06.43-.16 1.13-.2 1.35h-1.4l-.19-1.35-.16-1.13-1.06-.43c-.43-.18-.83-.41-1.23-.71l-.91-.7-1.06.43-1.27.51-.7-1.21 1.08-.84.89-.7-.14-1.13c-.03-.31-.05-.54-.05-.74s.02-.43.05-.73l.14-1.13-.89-.7-1.08-.84.7-1.21 1.27.51 1.04.42.9-.68c.43-.32.84-.56 1.25-.73l1.06-.43.16-1.13.2-1.35h1.39l.19 1.35.16 1.13 1.06.43c.43.18.83.41 1.23.71l.91.7 1.06-.43 1.27-.51.7 1.21-1.07.85-.89.7.14 1.13zM12 8c-2.21 0-4 1.79-4 4s1.79 4 4 4 4-1.790 4-4-1.790-4-4-4zm0 6c-1.100 0-2-.9-2-2s.9-2 2-2 2 .9 2 2-.9 2-2 2z"/></svg>
<svg class="b" style="left:1459px;top:142px" width="16" height="16" viewBox="0 0 16 16" fill="#444746"><circle cx="2" cy="2" r="1.700"/><circle cx="2" cy="8" r="1.700"/><circle cx="2" cy="14" r="1.700"/><circle cx="8" cy="2" r="1.700"/><circle cx="8" cy="8" r="1.700"/><circle cx="8" cy="14" r="1.700"/><circle cx="14" cy="2" r="1.700"/><circle cx="14" cy="8" r="1.700"/><circle cx="14" cy="14" r="1.700"/></svg>
<div class="b" style="left:1496px;top:134.5px;width:29px;height:29px;background:#455a64;border-radius:15px;"></div>
<span class="t" style="left:1507.5px;top:139.5px;font-size:18px;color:#fff;font-weight:700;">f</span>
<div class="b" style="left:7px;top:186px;width:51px;height:50px;background:#c2e7ff;border-radius:16px;"></div>
<svg class="b" style="left:22.5px;top:200.5px;" width="21" height="21" viewBox="0 0 24 24" fill="#001d35"><path d="M14.060 9.020l.920.920L5.920 19H5v-.920l9.060-9.060M17.660 3c-.250 0-.510.100-.700.290l-1.830 1.830 3.750 3.750 1.830-1.830c.390-.390.390-1.020 0-1.410l-2.340-2.340c-.200-.200-.450-.290-.710-.290zm-3.600 3.190L3 17.250V21h3.750L17.810 9.940l-3.750-3.750z" fill-rule="evenodd"/></svg>
<div class="b" style="left:18px;top:251px;width:28px;height:28px;background:#d3e3fd;border-radius:14px;"></div>
<svg class="b" style="left:23.5px;top:256.5px;" width="17" height="17" viewBox="0 0 24 24" fill="#001d35"><path d="M19 3H4.99c-1.11 0-1.98.9-1.98 2L3 19c0 1.1.88 2 1.99 2H19c1.1 0 2-.9 2-2V5c0-1.1-.9-2-2-2zm0 12h-4c0 1.66-1.35 3-3 3s-3-1.34-3-3H4.990V5H19v10z"/></svg>
<svg class="b" style="left:23.0px;top:286.0px;" width="18" height="18" viewBox="0 0 24 24" fill="#444746"><path d="M22 9.24l-7.19-.62L12 2 9.19 8.63 2 9.24l5.46 4.73L5.82 21 12 17.27 18.18 21l-1.63-7.03L22 9.24zM12 15.4l-3.76 2.27 1-4.28-3.32-2.88 4.38-.38L12 6.1l1.71 4.04 4.38.38-3.32 2.88 1 4.28L12 15.4z"/></svg>
<svg class="b" style="left:23.0px;top:314.0px;" width="18" height="18" viewBox="0 0 24 24" fill="#444746"><path d="M11.99 2C6.47 2 2 6.48 2 12s4.47 10 9.99 10C17.52 22 22 17.52 22 12S17.52 2 11.99 2zM12 20c-4.42 0-8-3.58-8-8s3.58-8 8-8 8 3.58 8 8-3.58 8-8 8zm.5-13H11v6l5.25 3.150.75-1.230-4.500-2.670z"/></svg>
<svg class="b" style="left:23.500px;top:343.500px" width="17" height="17" viewBox="0 0 24 24" fill="none" stroke="#444746" stroke-width="2" stroke-linejoin="round"><path d="M3.500 4.500 L21 12 L3.500 19.500 V14 L13 12 L3.500 10z"/></svg>
<svg class="b" style="left:23.5px;top:372.5px;" width="17" height="17" viewBox="0 0 24 24" fill="#444746"><path d="M14 2H6c-1.1 0-1.99.9-1.99 2L4 20c0 1.1.89 2 1.990 2H18c1.100 0 2-.9 2-2V8l-6-6zM6 20V4h7v5h5v11H6z"/></svg>
<svg class="b" style="left:23.5px;top:401.0px;" width="17" height="17" viewBox="0 0 24 24" fill="#444746"><path d="M18 6h-2c0-2.21-1.79-4-4-4S8 3.79 8 6H6c-1.1 0-2 .9-2 2v12c0 1.1.9 2 2 2h12c1.1 0 2-.9 2-2V8c0-1.1-.9-2-2-2zm-6-2c1.1 0 2 .9 2 2h-4c0-1.100.9-2 2-2zm6 16H6V8h2v2c0 .55.45 1 1 1s1-.45 1-1V8h4v2c0 .55.45 1 1 1s1-.45 1-1V8h2v12z"/></svg>
<svg class="b" style="left:23.0px;top:429.0px;" width="18" height="18" viewBox="0 0 24 24" fill="#444746"><path d="M16.59 8.59L12 13.17 7.41 8.59 6 10l6 6 6-6z"/></svg>
<svg class="b" style="left:23.0px;top:477.0px;" width="18" height="18" viewBox="0 0 24 24" fill="#444746"><path d="M19 13h-6v6h-2v-6H5v-2h6V5h2v6h6v2z"/></svg>
<div class="b" style="left:65px;top:179px;width:1426px;height:838px;background:#fff;border-radius:16px;"></div>
<svg class="b" style="left:79.5px;top:191.5px;" width="17" height="17" viewBox="0 0 24 24" fill="#444746"><path d="M20 11H7.83l5.59-5.59L12 4l-8 8 8 8 1.41-1.41L7.83 13H20v-2z"/></svg>
<svg class="b" style="left:131.0px;top:192.0px;" width="16" height="16" viewBox="0 0 24 24" fill="#444746"><path d="M20.54 5.23l-1.39-1.68C18.88 3.21 18.47 3 18 3H6c-.47 0-.88.21-1.16.55L3.46 5.23C3.17 5.57 3 6.02 3 6.5V19c0 1.1.9 2 2 2h14c1.1 0 2-.9 2-2V6.5c0-.48-.17-.93-.46-1.27zM6.24 5h11.520l.830 1H5.420l.820-1zM5 19V8h14v11H5zm8.450-9h-2.900v3H8l4 4 4-4h-2.550z"/></svg>
<svg class="b" style="left:170.0px;top:192.0px;" width="16" height="16" viewBox="0 0 24 24" fill="#444746"><path d="M11 15h2v2h-2zm0-8h2v6h-2zm.99-5C6.47 2 2 6.48 2 12s4.47 10 9.99 10C17.52 22 22 17.52 22 12S17.52 2 11.99 2zM12 20c-4.42 0-8-3.58-8-8s3.58-8 8-8 8 3.58 8 8-3.58 8-8 8z"/></svg>
<svg class="b" style="left:210.0px;top:192.0px;" width="16" height="16" viewBox="0 0 24 24" fill="#444746"><path d="M16 9v10H8V9h8m-1.5-6h-5l-1 1H5v2h14V4h-3.500l-1-1zM18 7H6v12c0 1.1.9 2 2 2h8c1.100 0 2-.9 2-2V7z"/></svg>
<div class="b" style="left:245px;top:191px;width:1px;height:18px;background:#e0e0e0;"></div>
<svg class="b" style="left:263.5px;top:191.5px;" width="17" height="17" viewBox="0 0 24 24" fill="#444746"><path d="M22 8.98V18c0 1.1-.9 2-2 2H4c-1.1 0-2-.9-2-2V6c0-1.1.9-2 2-2h10.100c-.060.320-.100.660-.100 1 0 .340.040.680.100 1H4l8 5 3.670-2.290c.470.430 1.020.760 1.630.980L12 13 4 8v10h16V9.900c.740-.150 1.420-.480 2-.920zM16 5c0 1.660 1.340 3 3 3s3-1.340 3-3-1.340-3-3-3-3 1.340-3 3z"/></svg>
<svg class="b" style="left:302.5px;top:191.5px;" width="17" height="17" viewBox="0 0 24 24" fill="#444746"><path d="M20 6h-8l-2-2H4c-1.1 0-2 .9-2 2v12c0 1.1.9 2 2 2h16c1.1 0 2-.9 2-2V8c0-1.100-.9-2-2-2zm0 12H4V6h5.170l2 2H20v10zm-7.840-6H8v2h4.160l-1.590 1.590L11.990 17 16 13.010 11.990 9l-1.410 1.410L12.160 12z"/></svg>
<svg class="b" style="left:339.0px;top:192.0px;" width="16" height="16" viewBox="0 0 24 24" fill="#444746"><path d="M12 8c1.1 0 2-.9 2-2s-.9-2-2-2-2 .9-2 2 .9 2 2 2zm0 2c-1.1 0-2 .9-2 2s.9 2 2 2 2-.9 2-2-.9-2-2-2zm0 6c-1.1 0-2 .9-2 2s.9 2 2 2 2-.9 2-2-.9-2-2-2z"/></svg>
<span class="t" style="left:1315.0px;top:194.1px;font-size:12px;color:#5f6368;letter-spacing:-0.839px;">1 of 1</span>
<svg class="b" style="left:1357.0px;top:191.0px;" width="18" height="18" viewBox="0 0 24 24" fill="#b0b3b8"><path d="M15.41 7.41L14 6l-6 6 6 6 1.410-1.410L10.830 12z"/></svg>
<svg class="b" style="left:1392.0px;top:191.0px;" width="18" height="18" viewBox="0 0 24 24" fill="#b0b3b8"><path d="M10 6L8.590 7.410 13.170 12l-4.580 4.590L10 18l6-6z"/></svg>
<svg class="b" style="left:1427px;top:196px" width="17" height="9" viewBox="0 0 17 9"><rect width="17" height="9" rx="1" fill="#444746"/><path d="M2 2.500 H15 M2 4.500 H15 M4 6.700 H13" stroke="#9aa0a6" stroke-width=".8" stroke-dasharray="1.200 .8"/></svg>
<svg class="b" style="left:1448px;top:198px" width="8" height="4" viewBox="0 0 8 4"><path d="M0 0 H8 L4 4z" fill="#444746"/></svg>
<div class="b" style="left:1481px;top:222px;width:10px;height:656px;background:#c8c8c8;"></div>
<span class="t" style="left:130.0px;top:242.4px;font-size:20px;color:#1f1f1f;letter-spacing:0.080px;">Attendance</span>
<div class="b" style="left:242px;top:244px;width:45px;height:16px;background:#dddddd;border-radius:4px;"></div>
<span class="t" style="left:246.0px;top:246.2px;font-size:11px;color:#444;letter-spacing:-0.184px;">Inbox</span>
<span class="t" style="left:276.0px;top:245.6px;font-size:12px;color:#444;letter-spacing:-0.016px;">×</span>
<svg class="b" style="left:1411.5px;top:243.0px;" width="18" height="18" viewBox="0 0 24 24" fill="#444746"><path d="M19 8h-1V3H6v5H5c-1.66 0-3 1.34-3 3v6h4v4h12v-4h4v-6c0-1.660-1.340-3-3-3zM8 5h8v3H8V5zm8 12v2H8v-4h8v2zm2-2v-2H6v2H4v-4c0-.550.450-1 1-1h14c.550 0 1 .450 1 1v4h-2z"/></svg>
<svg class="b" style="left:1444.5px;top:243.5px;" width="17" height="17" viewBox="0 0 24 24" fill="#444746"><path d="M19 19H5V5h7V3H5c-1.110 0-2 .9-2 2v14c0 1.100.890 2 2 2h14c1.100 0 2-.9 2-2v-7h-2v7zM14 3v2h3.590l-9.830 9.830 1.410 1.410L19 6.410V10h2V3h-7z"/></svg>
<svg class="b" style="left:79px;top:283px" width="36" height="36" viewBox="0 0 36 36"><defs><clipPath id="avc"><circle cx="18" cy="18" r="18"/></clipPath></defs><circle cx="18" cy="18" r="18" fill="#a0c3ff"/><g clip-path="url(#avc)" fill="#4374e0"><circle cx="18" cy="14" r="6.500"/><ellipse cx="18" cy="30.500" rx="11.500" ry="7.500"/></g></svg>
<span class="t" style="left:130.0px;top:285.4px;font-size:12.5px;color:#1f1f1f;font-weight:700;letter-spacing:-0.131px;">LiveT</span>
<span class="t" style="left:165.0px;top:286.2px;font-size:11px;color:#5e5e5e;letter-spacing:-0.009px;">appteam@calimatic.com <span style="text-decoration:underline;color:#333">via</span> sendgrid.net</span>
<span class="t" style="left:130.0px;top:304.2px;font-size:11px;color:#5e5e5e;letter-spacing:-0.069px;">to me, haseeb.saufik1, saufiktesters</span>
<svg class="b" style="left:308px;top:308px" width="8" height="4" viewBox="0 0 8 4"><path d="M0 0 H8 L4 4z" fill="#444746"/></svg>
<span class="t" style="left:1200.0px;top:286.2px;font-size:11px;color:#5e5e5e;letter-spacing:-0.080px;">8:25 AM (0 minutes ago)</span>
<svg class="b" style="left:1335.5px;top:282.5px;" width="19" height="19" viewBox="0 0 24 24" fill="#444746"><path d="M22 9.24l-7.19-.62L12 2 9.19 8.63 2 9.24l5.46 4.73L5.82 21 12 17.27 18.18 21l-1.63-7.03L22 9.24zM12 15.4l-3.76 2.27 1-4.28-3.32-2.88 4.38-.38L12 6.1l1.71 4.04 4.38.38-3.32 2.88 1 4.28L12 15.4z"/></svg>
<svg class="b" style="left:1372px;top:283px" width="18" height="18" viewBox="0 0 18 18" fill="none" stroke="#747775" stroke-width="1.400"><circle cx="9" cy="9" r="7.500"/><circle cx="6.300" cy="7" r=".6" fill="#747775"/><circle cx="11.700" cy="7" r=".6" fill="#747775"/><path d="M5.500 10.500 Q9 14.500 12.500 10.500"/></svg>
<svg class="b" style="left:1408px;top:283px" width="18" height="18" viewBox="0 0 18 18" fill="none" stroke="#444746" stroke-width="1.700"><path d="M7 4 L2.500 8.500 L7 13 M2.500 8.500 H10 Q15.500 8.500 15.500 15"/></svg>
<svg class="b" style="left:1444.5px;top:283.5px;" width="17" height="17" viewBox="0 0 24 24" fill="#444746"><path d="M12 8c1.1 0 2-.9 2-2s-.9-2-2-2-2 .9-2 2 .9 2 2 2zm0 2c-1.1 0-2 .9-2 2s.9 2 2 2 2-.9 2-2-.9-2-2-2zm0 6c-1.1 0-2 .9-2 2s.9 2 2 2 2-.9 2-2-.9-2-2-2z"/></svg>
<div class="b" style="left:130px;top:326px;width:1332px;height:654px;background:#ebeef1;"></div>
<div class="b" style="left:148px;top:352.5px;width:1296px;height:500px;background:#fff;"></div>
<span class="t" style="left:175.0px;top:373.6px;font-size:12px;color:#3d5b7a;letter-spacing:-0.115px;">Hello,</span>
<span class="t" style="left:175.0px;top:410.6px;font-size:12px;color:#3d5b7a;letter-spacing:-0.150px;">The above-mentioned student has been reported as</span>
<div class="b" style="left:447.5px;top:408.5px;width:92.5px;height:16.5px;background:#0b66c2;border-radius:3px;"></div>
<span class="t" style="left:449.5px;top:410.6px;font-size:12px;color:#fff;font-weight:700;letter-spacing:-0.203px;">Cancelled Class</span>
<span class="t" style="left:544.5px;top:410.6px;font-size:12px;color:#3d5b7a;letter-spacing:-0.170px;">on Dec 22nd, 2025 from</span>
<span class="t" style="left:673.0px;top:410.6px;font-size:12px;color:#3d5b7a;font-weight:700;letter-spacing:-0.167px;">CLASSICAL MECHANICS - Classical Mechanics</span>
<span class="t" style="left:175.0px;top:445.6px;font-size:12px;color:#3d5b7a;font-weight:700;letter-spacing:-0.224px;">Notes:</span>
<span class="t" style="left:214.5px;top:445.6px;font-size:12px;color:#3d5b7a;letter-spacing:-0.124px;">Suyfan waddeer</span>
<span class="t" style="left:175.0px;top:480.6px;font-size:12px;color:#3d5b7a;letter-spacing:-0.140px;">Please contact us if you have any questions or concerns.</span>
<span class="t" style="left:175.0px;top:515.6px;font-size:12px;color:#3d5b7a;letter-spacing:-0.138px;">Thank you!</span>
<div class="b" style="left:175px;top:563px;width:1241.5px;height:132.5px;background:#f8f8f8;"></div>
<div class="b" style="left:175px;top:563px;width:3px;height:132.5px;background:#1565c0;"></div>
<span class="t" style="left:192.0px;top:586.1px;font-size:12px;color:#3d5b7a;font-weight:700;letter-spacing:-0.332px;">Student:</span>
<span class="t" style="left:242.0px;top:586.1px;font-size:12px;color:#3d5b7a;letter-spacing:-0.209px;">Sufyan Qadeer</span>
<span class="t" style="left:192.0px;top:610.6px;font-size:12px;color:#3d5b7a;font-weight:700;letter-spacing:-0.339px;">Class:</span>
<span class="t" style="left:230.0px;top:610.6px;font-size:12px;color:#3d5b7a;letter-spacing:-0.178px;">CLASSICAL MECHANICS - Classical Mechanics</span>
<span class="t" style="left:192.0px;top:635.1px;font-size:12px;color:#3d5b7a;font-weight:700;letter-spacing:-0.403px;">Date:</span>
<span class="t" style="left:224.0px;top:635.1px;font-size:12px;color:#3d5b7a;letter-spacing:-0.200px;">December 22, 2025</span>
<span class="t" style="left:192.0px;top:660.1px;font-size:12px;color:#3d5b7a;font-weight:700;letter-spacing:-0.382px;">Status:</span>
<span class="t" style="left:234.5px;top:660.1px;font-size:12px;color:#1e8e1e;letter-spacing:-0.181px;">Cancelled Class</span>
<span class="t" style="left:175.0px;top:730.6px;font-size:12px;color:#3d5b7a;letter-spacing:-0.140px;">Please contact us if you have any questions or concerns.</span>
<span class="t" style="left:175.0px;top:765.1px;font-size:12px;color:#3d5b7a;letter-spacing:-0.138px;">Thank you!</span>
<svg class="b" style="left:701.5px;top:878.0px" width="33.5" height="33.5" viewBox="0 0 20 20"><defs><linearGradient id="cgc12" x1="0" y1="0" x2="0" y2="1"><stop offset="0" stop-color="#22cdea"/><stop offset="1" stop-color="#0a84a6"/></linearGradient><radialGradient id="cgs12" cx=".4" cy=".4" r=".7"><stop offset="0" stop-color="#ffffff"/><stop offset=".7" stop-color="#e9dcdc"/><stop offset="1" stop-color="#8d9399"/></radialGradient></defs><path fill-rule="evenodd" d="M9.500 1 a9 9 0 1 0 0.001 0z M11.300 2.500 a7.200 7.200 0 1 1 -0.001 0z" fill="url(#cgc12)"/><path d="M13 1.800 A9 9 0 0 1 18.400 8 L20 10 L18.400 13 A9 9 0 0 1 15 17.200 L20 20 L20 0z" fill="none"/><circle cx="11.700" cy="9.600" r="6.700" fill="url(#cgs12)"/><path d="M9 6.500 l3-1.500 2.500 1.500 -1 3 -2.500 .800 -2-1.800z M13 11 l3-.500 .500 2.500 -2.500 1.500z M8.500 11 l1.500 .500 .500 2 -1.500-.500z" fill="#6d747b" opacity=".85"/></svg>
<span class="t" style="left:743.0px;top:888.2px;font-size:21px;color:#1787b8;transform:scaleX(1.2356);transform-origin:0 50%;background:linear-gradient(180deg,#20a4d8 25%,#0b5f8a 80%);-webkit-background-clip:text;background-clip:text;color:transparent;-webkit-text-stroke:.5px rgba(16,120,170,.9);">CALIMATIC</span>
<span class="t" style="left:877.0px;top:882.3px;font-size:8px;color:#1787b8;">®</span>
<span class="t" style="left:712.0px;top:931.1px;font-size:12px;color:#2f7fc8;letter-spacing:-0.155px;">Contact us <span style="color:#222;font-size:10px;position:relative;top:-1px">●</span> www.calimatic.com</span>
<span class="t" style="left:653.0px;top:965.6px;font-size:12px;color:#3d5b7a;letter-spacing:-0.129px;">{year} © Caliber Technologies Inc. All Rights Reserved.</span>
<span class="t" style="left:130.0px;top:995.1px;font-size:12px;color:#222;letter-spacing:-0.139px;">If you'd like to unsubscribe and stop receiving these emails <span style="color:#1a56db;text-decoration:underline">click here </span>.</span>
<div class="b" style="left:62px;top:227.5px;width:961px;height:615.5px;border-radius:3px;border:4px solid #ff0000;box-sizing:border-box;"></div>
<svg class="b" style="left:1508px;top:196px" width="17" height="17" viewBox="0 0 17 17"><rect x="0" y="0" width="17" height="17" rx="2" fill="#fff"/><path d="M0 3.500 V2 Q0 0 2 0 H15 Q17 0 17 2 V3.500z" fill="#1a73e8"/><rect x="0" y="3.500" width="3.500" height="10" fill="#1a73e8"/><rect x="13.500" y="3.500" width="3.500" height="10" fill="#fbbc04"/><path d="M0 13.500 H3.500 V17 H2 Q0 17 0 15z" fill="#188038"/><rect x="3.500" y="13.500" width="10" height="3.500" fill="#34a853"/><path d="M13.500 13.500 H17 L13.500 17z" fill="#ea4335"/><text x="8.500" y="11.500" font-size="7.500" font-family="Liberation Sans, sans-serif" font-weight="700" fill="#1a73e8" text-anchor="middle">31</text></svg>
<svg class="b" style="left:1508px;top:245px" width="17" height="17" viewBox="0 0 17 17"><rect width="17" height="17" rx="2.500" fill="#fbbc04"/><path d="M8.500 3.500 a3.300 3.300 0 0 0 -1.800 6 V11 h3.600 V9.500 a3.300 3.300 0 0 0 -1.800 -6z M6.700 12 h3.600 v1.300 h-3.600z" fill="#fff"/></svg>
<svg class="b" style="left:1507px;top:296px" width="18" height="18" viewBox="0 0 18 18" fill="none"><circle cx="8.500" cy="9.500" r="6.500" stroke="#1a73e8" stroke-width="2.200"/><path d="M5.500 9.500 L8 12 L15 4" stroke="#1a73e8" stroke-width="2.200"/><circle cx="15.200" cy="3.600" r="1.500" fill="#1a73e8"/></svg>
<svg class="b" style="left:1508px;top:346px" width="17" height="18" viewBox="0 0 17 18" fill="#1a73e8"><circle cx="8.500" cy="4.500" r="3.500"/><path d="M1.500 15 Q1.500 9.500 8.500 9.500 Q15.500 9.500 15.500 15 V16 H1.500z"/></svg>
<div class="b" style="left:1508px;top:395px;width:17px;height:1px;background:#dadce0;"></div>
<svg class="b" style="left:1506.0px;top:425.0px;" width="20" height="20" viewBox="0 0 24 24" fill="#1f1f1f"><path d="M19 13h-6v6h-2v-6H5v-2h6V5h2v6h6v2z"/></svg>
<svg class="b" style="left:1508.0px;top:999.0px;" width="16" height="16" viewBox="0 0 24 24" fill="#1f1f1f"><path d="M10 6L8.590 7.410 13.170 12l-4.580 4.590L10 18l6-6z"/></svg>
<svg class="b" style="left:1560.0px;top:132.0px" width="15" height="15" viewBox="0 0 16 16"><rect width="16" height="16" rx="3.500" fill="#7c3aed"/><path d="M4 12 L4.600 9.500 L10.500 3.600 L12.400 5.500 L6.500 11.400z" fill="#fff"/><path d="M8 12.300 H12" stroke="#fff" stroke-width="1.200"/></svg>
<span class="t" style="left:1583.0px;top:133.8px;font-size:14.5px;color:#1f1f1f;letter-spacing:-0.156px;-webkit-text-stroke:.3px #1f1f1f;">Side Notepad</span>
<svg class="b" style="left:1856px;top:132px" width="16" height="16" viewBox="0 0 16 16" fill="none" stroke="#1f1f1f" stroke-width="1.300"><path d="M5 2 H11 M6 2 V7 L4 9.500 H12 L10 7 V2 M8 9.500 V14.500"/><path d="M2 1.500 L14 14" /></svg>
<svg class="b" style="left:1888.5px;top:131.5px;" width="17" height="17" viewBox="0 0 24 24" fill="#1f1f1f"><path d="M19 6.41L17.59 5 12 10.59 6.41 5 5 6.41 10.59 12 5 17.59 6.41 19 12 13.41 17.59 19 19 17.59 13.41 12z"/></svg>
<div class="b" style="left:1550px;top:159px;width:362px;height:863.5px;background:#f1f3f6;border-radius:14px;"></div>
<div class="b" style="left:1550px;top:247.5px;width:362px;height:775px;background:#fff;border-radius:0 0 14px 14px;border:1px solid #e3e8f0;box-sizing:border-box;border-top:none;"></div>
<span class="t" style="left:1568.0px;top:173.1px;font-size:14px;color:#444;letter-spacing:-0.021px;">Normal</span>
<span class="t" style="left:1681.0px;top:173.1px;font-size:14px;color:#444;letter-spacing:-0.021px;">Normal</span>
<svg class="b" style="left:1643px;top:174px" width="8" height="12" viewBox="0 0 8 12" fill="#444"><path d="M4 0 L7.500 4.500 H.5z M4 12 L7.500 7.500 H.5z"/></svg>
<svg class="b" style="left:1756px;top:174px" width="8" height="12" viewBox="0 0 8 12" fill="#444"><path d="M4 0 L7.500 4.500 H.5z M4 12 L7.500 7.500 H.5z"/></svg>
<span class="t" style="left:1566.6px;top:196.6px;font-size:15px;color:#444;font-weight:700;">B</span>
<span class="t" style="left:1597.1px;top:196.6px;font-size:15px;color:#0b66c2;font-weight:700;font-style:italic;font-family:'Liberation Serif', serif;">I</span>
<span class="t" style="left:1623.9px;top:196.6px;font-size:14px;color:#444;text-decoration:underline;text-underline-offset:2px;">U</span>
<span class="t" style="left:1652.3px;top:197.1px;font-size:14px;color:#444;text-decoration:line-through;">S</span>
<svg class="b" style="left:1692px;top:198px" width="14" height="13" viewBox="0 0 14 13" stroke="#444" stroke-width="1.500"><path d="M0 1.500 H10 M0 6.500 H14 M0 11.500 H8"/></svg>
<svg class="b" style="left:1735px;top:198px" width="15" height="13" viewBox="0 0 15 13" stroke="#444" stroke-width="1.500"><path d="M4.500 1.500 H15 M4.500 6.500 H15 M4.500 11.500 H15"/><path d="M.5 .5 H2 V3 M.5 5.500 H2 L.5 7.500 H2.500 M.5 10 H2 V12.500 H.5" stroke-width=".7" fill="none"/></svg>
<svg class="b" style="left:1764px;top:198px" width="15" height="13" viewBox="0 0 15 13" stroke="#444" stroke-width="1.500"><path d="M4.500 1.500 H15 M4.500 6.500 H15 M4.500 11.500 H15"/><path d="M0 1.500 H2 M0 6.500 H2 M0 11.500 H2"/></svg>
<span class="t" style="left:1805.3px;top:197.1px;font-size:14px;color:#444;font-weight:700;">X</span>
<span class="t" style="left:1816.0px;top:205.8px;font-size:7px;color:#444;font-weight:700;">2</span>
<span class="t" style="left:1833.3px;top:197.1px;font-size:14px;color:#444;font-weight:700;">X</span>
<span class="t" style="left:1844.0px;top:195.8px;font-size:7px;color:#444;font-weight:700;">2</span>
<span class="t" style="left:1564.5px;top:219.1px;font-size:30px;color:#444;font-weight:700;">”</span>
<svg class="b" style="left:1594px;top:224px" width="15" height="10" viewBox="0 0 15 10" fill="none" stroke="#444" stroke-width="1.400"><path d="M4 1.500 L1 5 L4 8.500 M11 1.500 L14 5 L11 8.500 M8.800 .5 L6.200 9.500"/></svg>
<svg class="b" style="left:1636px;top:221px" width="16" height="16" viewBox="0 0 16 16" fill="none" stroke="#444" stroke-width="1.600"><rect x="1" y="3" width="8" height="5.500" rx="2.700" transform="rotate(40 5 5.700)"/><rect x="7" y="8" width="8" height="5.500" rx="2.700" transform="rotate(40 11 10.700)"/></svg>
<svg class="b" style="left:1665px;top:222.500px" width="15" height="13" viewBox="0 0 15 13"><rect x=".7" y=".7" width="13.600" height="11.600" fill="none" stroke="#444" stroke-width="1.400"/><circle cx="4.200" cy="4.200" r="1.200" fill="#444"/><path d="M2.500 10.500 L6 6.500 L8 8.500 L10 7 L12.500 10.500z" fill="#444"/></svg>
<span class="t" style="left:1706.8px;top:221.1px;font-size:15px;color:#444;font-style:italic;font-family:'Liberation Serif', serif;text-decoration:underline;">T</span>
<span class="t" style="left:1718.5px;top:228.2px;font-size:9px;color:#444;font-weight:700;">x</span>
<span class="t" style="left:1751.9px;top:220.6px;font-size:14px;color:#444;font-weight:700;">A</span>
<div class="b" style="left:1750px;top:236.5px;width:14px;height:1.2px;background:#999;"></div>
<svg class="b" style="left:1778px;top:221px" width="16" height="16" viewBox="0 0 16 16"><defs><pattern id="hatch" width="2" height="2" patternUnits="userSpaceOnUse"><rect width="1" height="1" fill="#444"/><rect x="1" y="1" width="1" height="1" fill="#444"/></pattern></defs><rect width="16" height="16" fill="url(#hatch)"/></svg>
<span class="t" style="left:1781.3px;top:221.6px;font-size:13px;color:#444;font-weight:700;-webkit-text-stroke:1.500px #fff;paint-order:stroke fill;">A</span>
<div class="b" style="left:1888px;top:201px;width:22px;height:22px;background:#fff;border-radius:2px;box-shadow:0 0 2px rgba(0,0,0,.15);"></div>
<svg class="b" style="left:1891.0px;top:204.0px;" width="16" height="16" viewBox="0 0 24 24" fill="#1f1f1f"><path d="M15.41 7.41L14 6l-6 6 6 6 1.410-1.410L10.830 12z"/></svg>
<span class="t" style="left:1566.0px;top:261.8px;font-size:13px;color:#111;letter-spacing:0.021px;"><span style="color:#111;">Active Student </span><span style="color:#111;">enrolement</span></span>
<svg class="b" style="left:1652.8px;top:272.9px;overflow:hidden" width="66.3" height="7" viewBox="0 -3.500 66.3 7" fill="none"><path d="M0 0 q1.500 -3.200 3 0 t3 0 q1.500 -3.200 3 0 t3 0 q1.500 -3.200 3 0 t3 0 q1.500 -3.200 3 0 t3 0 q1.500 -3.200 3 0 t3 0 q1.500 -3.200 3 0 t3 0 q1.500 -3.200 3 0 t3 0 q1.500 -3.200 3 0 t3 0 q1.500 -3.200 3 0 t3 0 q1.500 -3.200 3 0 t3 0 q1.500 -3.200 3 0 t3 0 q1.500 -3.200 3 0 t3 0 q1.500 -3.200 3 0 t3 0" stroke="#ff3434" stroke-width="1.500"/></svg>
<span class="t" style="left:1566.0px;top:279.8px;font-size:13px;color:#111;letter-spacing:-0.001px;"><span style="color:#111;">Email: </span><span style="color:#111;">ActiveStudentenr</span><span style="color:#111;">@mailinator.com</span></span>
<svg class="b" style="left:1604.7px;top:290.9px;overflow:hidden" width="100.0" height="7" viewBox="0 -3.500 100.0 7" fill="none"><path d="M0 0 q1.500 -3.200 3 0 t3 0 q1.500 -3.200 3 0 t3 0 q1.500 -3.200 3 0 t3 0 q1.500 -3.200 3 0 t3 0 q1.500 -3.200 3 0 t3 0 q1.500 -3.200 3 0 t3 0 q1.500 -3.200 3 0 t3 0 q1.500 -3.200 3 0 t3 0 q1.500 -3.200 3 0 t3 0 q1.500 -3.200 3 0 t3 0 q1.500 -3.200 3 0 t3 0 q1.500 -3.200 3 0 t3 0 q1.500 -3.200 3 0 t3 0 q1.500 -3.200 3 0 t3 0 q1.500 -3.200 3 0 t3 0 q1.500 -3.200 3 0 t3 0 q1.500 -3.200 3 0 t3 0 q1.500 -3.200 3 0 t3 0" stroke="#ff3434" stroke-width="1.500"/></svg>
<span class="t" style="left:1566.0px;top:316.1px;font-size:13px;color:#111;letter-spacing:0.004px;"><span style="color:#111;">Inactive Student </span><span style="color:#111;">enrolement</span></span>
<svg class="b" style="left:1661.9px;top:327.2px;overflow:hidden" width="66.1" height="7" viewBox="0 -3.500 66.1 7" fill="none"><path d="M0 0 q1.500 -3.200 3 0 t3 0 q1.500 -3.200 3 0 t3 0 q1.500 -3.200 3 0 t3 0 q1.500 -3.200 3 0 t3 0 q1.500 -3.200 3 0 t3 0 q1.500 -3.200 3 0 t3 0 q1.500 -3.200 3 0 t3 0 q1.500 -3.200 3 0 t3 0 q1.500 -3.200 3 0 t3 0 q1.500 -3.200 3 0 t3 0 q1.500 -3.200 3 0 t3 0 q1.500 -3.200 3 0 t3 0 q1.500 -3.200 3 0 t3 0" stroke="#ff3434" stroke-width="1.500"/></svg>
<span class="t" style="left:1566.0px;top:335.6px;font-size:13px;color:#111;letter-spacing:0.015px;"><span style="color:#111;">Active Student NO </span><span style="color:#111;">enrolement</span></span>
<svg class="b" style="left:1675.8px;top:346.7px;overflow:hidden" width="66.2" height="7" viewBox="0 -3.500 66.2 7" fill="none"><path d="M0 0 q1.500 -3.200 3 0 t3 0 q1.500 -3.200 3 0 t3 0 q1.500 -3.200 3 0 t3 0 q1.500 -3.200 3 0 t3 0 q1.500 -3.200 3 0 t3 0 q1.500 -3.200 3 0 t3 0 q1.500 -3.200 3 0 t3 0 q1.500 -3.200 3 0 t3 0 q1.500 -3.200 3 0 t3 0 q1.500 -3.200 3 0 t3 0 q1.500 -3.200 3 0 t3 0 q1.500 -3.200 3 0 t3 0 q1.500 -3.200 3 0 t3 0" stroke="#ff3434" stroke-width="1.500"/></svg>
<span class="t" style="left:1566.0px;top:353.6px;font-size:13px;color:#111;letter-spacing:-0.006px;"><span style="color:#111;">Inactive Active Student </span><span style="color:#111;">enrolement</span></span>
<svg class="b" style="left:1700.0px;top:364.7px;overflow:hidden" width="66.0" height="7" viewBox="0 -3.500 66.0 7" fill="none"><path d="M0 0 q1.500 -3.200 3 0 t3 0 q1.500 -3.200 3 0 t3 0 q1.500 -3.200 3 0 t3 0 q1.500 -3.200 3 0 t3 0 q1.500 -3.200 3 0 t3 0 q1.500 -3.200 3 0 t3 0 q1.500 -3.200 3 0 t3 0 q1.500 -3.200 3 0 t3 0 q1.500 -3.200 3 0 t3 0 q1.500 -3.200 3 0 t3 0 q1.500 -3.200 3 0 t3 0 q1.500 -3.200 3 0 t3 0" stroke="#ff3434" stroke-width="1.500"/></svg>
<span class="t" style="left:1566.0px;top:372.6px;font-size:13px;color:#111;letter-spacing:-0.005px;"><span style="color:#111;">Deleted Student enrolled</span></span>
<span class="t" style="left:1566.0px;top:409.6px;font-size:13px;color:#111;letter-spacing:0.029px;"><span style="color:#2a74c5;">previous recurring cart</span></span>
<span class="t" style="left:1566.0px;top:446.1px;font-size:13px;color:#111;letter-spacing:0.004px;"><span style="color:#111;">Active student : </span><span style="color:#2a74c5;">Abraham Thomas</span></span>
<span class="t" style="left:1566.0px;top:464.6px;font-size:13px;color:#111;letter-spacing:0.005px;"><span style="color:#111;">activestudent1</span><span style="color:#111;">@mailinator.com</span></span>
<svg class="b" style="left:1565.0px;top:475.7px;overflow:hidden" width="84.9" height="7" viewBox="0 -3.500 84.9 7" fill="none"><path d="M0 0 q1.500 -3.200 3 0 t3 0 q1.500 -3.200 3 0 t3 0 q1.500 -3.200 3 0 t3 0 q1.500 -3.200 3 0 t3 0 q1.500 -3.200 3 0 t3 0 q1.500 -3.200 3 0 t3 0 q1.500 -3.200 3 0 t3 0 q1.500 -3.200 3 0 t3 0 q1.500 -3.200 3 0 t3 0 q1.500 -3.200 3 0 t3 0 q1.500 -3.200 3 0 t3 0 q1.500 -3.200 3 0 t3 0 q1.500 -3.200 3 0 t3 0 q1.500 -3.200 3 0 t3 0 q1.500 -3.200 3 0 t3 0 q1.500 -3.200 3 0 t3 0" stroke="#ff3434" stroke-width="1.500"/></svg>
<span class="t" style="left:1566.0px;top:482.6px;font-size:13px;color:#111;letter-spacing:0.010px;"><span style="color:#111;">Active parent</span></span>
<span class="t" style="left:1566.0px;top:501.6px;font-size:13px;color:#111;letter-spacing:0.011px;"><span style="color:#111;">activeparentt1</span><span style="color:#111;">@mailinator.com</span></span>
<svg class="b" style="left:1565.0px;top:512.7px;overflow:hidden" width="82.8" height="7" viewBox="0 -3.500 82.8 7" fill="none"><path d="M0 0 q1.500 -3.200 3 0 t3 0 q1.500 -3.200 3 0 t3 0 q1.500 -3.200 3 0 t3 0 q1.500 -3.200 3 0 t3 0 q1.500 -3.200 3 0 t3 0 q1.500 -3.200 3 0 t3 0 q1.500 -3.200 3 0 t3 0 q1.500 -3.200 3 0 t3 0 q1.500 -3.200 3 0 t3 0 q1.500 -3.200 3 0 t3 0 q1.500 -3.200 3 0 t3 0 q1.500 -3.200 3 0 t3 0 q1.500 -3.200 3 0 t3 0 q1.500 -3.200 3 0 t3 0 q1.500 -3.200 3 0 t3 0" stroke="#ff3434" stroke-width="1.500"/></svg>
<span class="t" style="left:1566.0px;top:538.1px;font-size:13px;color:#111;letter-spacing:-0.044px;"><span style="color:#2a74c5;">Profile News:</span></span>
<span class="t" style="left:1566.0px;top:556.6px;font-size:13px;color:#111;letter-spacing:0.015px;"><span style="color:#111;">activestudent1221</span><span style="color:#111;">@mailinator.com</span></span>
<svg class="b" style="left:1565.0px;top:567.7px;overflow:hidden" width="106.8" height="7" viewBox="0 -3.500 106.8 7" fill="none"><path d="M0 0 q1.500 -3.200 3 0 t3 0 q1.500 -3.200 3 0 t3 0 q1.500 -3.200 3 0 t3 0 q1.500 -3.200 3 0 t3 0 q1.500 -3.200 3 0 t3 0 q1.500 -3.200 3 0 t3 0 q1.500 -3.200 3 0 t3 0 q1.500 -3.200 3 0 t3 0 q1.500 -3.200 3 0 t3 0 q1.500 -3.200 3 0 t3 0 q1.500 -3.200 3 0 t3 0 q1.500 -3.200 3 0 t3 0 q1.500 -3.200 3 0 t3 0 q1.500 -3.200 3 0 t3 0 q1.500 -3.200 3 0 t3 0 q1.500 -3.200 3 0 t3 0 q1.500 -3.200 3 0 t3 0 q1.500 -3.200 3 0 t3 0 q1.500 -3.200 3 0 t3 0" stroke="#ff3434" stroke-width="1.500"/></svg>
<span class="t" style="left:1566.0px;top:575.6px;font-size:13px;color:#111;letter-spacing:-0.069px;"><span style="color:#111;">parent:</span></span>
<span class="t" style="left:1566.0px;top:593.6px;font-size:13px;color:#111;letter-spacing:0.007px;"><span style="color:#111;">activestudent12221</span><span style="color:#111;">@mailinator.com</span></span>
<svg class="b" style="left:1565.0px;top:604.7px;overflow:hidden" width="113.9" height="7" viewBox="0 -3.500 113.9 7" fill="none"><path d="M0 0 q1.500 -3.200 3 0 t3 0 q1.500 -3.200 3 0 t3 0 q1.500 -3.200 3 0 t3 0 q1.500 -3.200 3 0 t3 0 q1.500 -3.200 3 0 t3 0 q1.500 -3.200 3 0 t3 0 q1.500 -3.200 3 0 t3 0 q1.500 -3.200 3 0 t3 0 q1.500 -3.200 3 0 t3 0 q1.500 -3.200 3 0 t3 0 q1.500 -3.200 3 0 t3 0 q1.500 -3.200 3 0 t3 0 q1.500 -3.200 3 0 t3 0 q1.500 -3.200 3 0 t3 0 q1.500 -3.200 3 0 t3 0 q1.500 -3.200 3 0 t3 0 q1.500 -3.200 3 0 t3 0 q1.500 -3.200 3 0 t3 0 q1.500 -3.200 3 0 t3 0 q1.500 -3.200 3 0 t3 0" stroke="#ff3434" stroke-width="1.500"/></svg>
<span class="t" style="left:1566.0px;top:649.9px;font-size:13px;color:#111;letter-spacing:-0.009px;"><span style="color:#111;">inactive student </span><span style="color:#2a74c5;">Audra Compton</span></span>
<span class="t" style="left:1566.0px;top:668.1px;font-size:13px;color:#111;letter-spacing:-0.018px;"><span style="color:#111;">inactivestudentt2</span><span style="color:#111;">@mailinator.com</span></span>
<svg class="b" style="left:1565.0px;top:679.2px;overflow:hidden" width="98.3" height="7" viewBox="0 -3.500 98.3 7" fill="none"><path d="M0 0 q1.500 -3.200 3 0 t3 0 q1.500 -3.200 3 0 t3 0 q1.500 -3.200 3 0 t3 0 q1.500 -3.200 3 0 t3 0 q1.500 -3.200 3 0 t3 0 q1.500 -3.200 3 0 t3 0 q1.500 -3.200 3 0 t3 0 q1.500 -3.200 3 0 t3 0 q1.500 -3.200 3 0 t3 0 q1.500 -3.200 3 0 t3 0 q1.500 -3.200 3 0 t3 0 q1.500 -3.200 3 0 t3 0 q1.500 -3.200 3 0 t3 0 q1.500 -3.200 3 0 t3 0 q1.500 -3.200 3 0 t3 0 q1.500 -3.200 3 0 t3 0 q1.500 -3.200 3 0 t3 0 q1.500 -3.200 3 0 t3 0" stroke="#ff3434" stroke-width="1.500"/></svg>
<span class="t" style="left:1566.0px;top:686.1px;font-size:13px;color:#111;letter-spacing:-0.019px;"><span style="color:#111;">Inactive parent</span></span>
<span class="t" style="left:1566.0px;top:704.6px;font-size:13px;color:#111;letter-spacing:-0.023px;"><span style="color:#111;">activeparentt2</span><span style="color:#111;">@mailinator.com</span></span>
<svg class="b" style="left:1565.0px;top:715.7px;overflow:hidden" width="82.3" height="7" viewBox="0 -3.500 82.3 7" fill="none"><path d="M0 0 q1.500 -3.200 3 0 t3 0 q1.500 -3.200 3 0 t3 0 q1.500 -3.200 3 0 t3 0 q1.500 -3.200 3 0 t3 0 q1.500 -3.200 3 0 t3 0 q1.500 -3.200 3 0 t3 0 q1.500 -3.200 3 0 t3 0 q1.500 -3.200 3 0 t3 0 q1.500 -3.200 3 0 t3 0 q1.500 -3.200 3 0 t3 0 q1.500 -3.200 3 0 t3 0 q1.500 -3.200 3 0 t3 0 q1.500 -3.200 3 0 t3 0 q1.500 -3.200 3 0 t3 0 q1.500 -3.200 3 0 t3 0" stroke="#ff3434" stroke-width="1.500"/></svg>
<span class="t" style="left:1566.0px;top:741.6px;font-size:13px;color:#111;letter-spacing:-0.033px;"><span style="color:#111;">CC mail</span></span>
<span class="t" style="left:1566.0px;top:778.6px;font-size:13px;color:#111;letter-spacing:-0.089px;"><span style="color:#111;">P CC mail.</span></span>
<span class="t" style="left:1566.0px;top:815.1px;font-size:13px;color:#111;letter-spacing:-0.033px;"><span style="color:#111;">Students for not marking attendance:</span></span>
<span class="t" style="left:1566.0px;top:833.6px;font-size:13px;color:#111;letter-spacing:-0.006px;"><span style="color:#111;">1: </span><span style="color:#2a74c5;">Emily Macias: </span><span style="color:#111;">noattendance1</span><span style="color:#111;">@mailinator.com</span></span>
<svg class="b" style="left:1663.2px;top:844.7px;overflow:hidden" width="87.0" height="7" viewBox="0 -3.500 87.0 7" fill="none"><path d="M0 0 q1.500 -3.200 3 0 t3 0 q1.500 -3.200 3 0 t3 0 q1.500 -3.200 3 0 t3 0 q1.500 -3.200 3 0 t3 0 q1.500 -3.200 3 0 t3 0 q1.500 -3.200 3 0 t3 0 q1.500 -3.200 3 0 t3 0 q1.500 -3.200 3 0 t3 0 q1.500 -3.200 3 0 t3 0 q1.500 -3.200 3 0 t3 0 q1.500 -3.200 3 0 t3 0 q1.500 -3.200 3 0 t3 0 q1.500 -3.200 3 0 t3 0 q1.500 -3.200 3 0 t3 0 q1.500 -3.200 3 0 t3 0 q1.500 -3.200 3 0 t3 0" stroke="#ff3434" stroke-width="1.500"/></svg>
<span class="t" style="left:1566.0px;top:852.6px;font-size:13px;color:#111;letter-spacing:-0.009px;"><span style="color:#111;">parent: </span><span style="color:#111;">noattendancep1</span><span style="color:#111;">@mailinator.com</span></span>
<svg class="b" style="left:1609.0px;top:863.7px;overflow:hidden" width="94.1" height="7" viewBox="0 -3.500 94.1 7" fill="none"><path d="M0 0 q1.500 -3.200 3 0 t3 0 q1.500 -3.200 3 0 t3 0 q1.500 -3.200 3 0 t3 0 q1.500 -3.200 3 0 t3 0 q1.500 -3.200 3 0 t3 0 q1.500 -3.200 3 0 t3 0 q1.500 -3.200 3 0 t3 0 q1.500 -3.200 3 0 t3 0 q1.500 -3.200 3 0 t3 0 q1.500 -3.200 3 0 t3 0 q1.500 -3.200 3 0 t3 0 q1.500 -3.200 3 0 t3 0 q1.500 -3.200 3 0 t3 0 q1.500 -3.200 3 0 t3 0 q1.500 -3.200 3 0 t3 0 q1.500 -3.200 3 0 t3 0 q1.500 -3.200 3 0 t3 0" stroke="#ff3434" stroke-width="1.500"/></svg>
<span class="t" style="left:1566.0px;top:870.6px;font-size:13px;color:#111;letter-spacing:-0.003px;"><span style="color:#111;">2:  </span><span style="color:#2a74c5;">Lydia Gentry : </span><span style="color:#111;">noattendance2</span><span style="color:#111;">@mailinator.com</span></span>
<svg class="b" style="left:1667.1px;top:881.7px;overflow:hidden" width="87.0" height="7" viewBox="0 -3.500 87.0 7" fill="none"><path d="M0 0 q1.500 -3.200 3 0 t3 0 q1.500 -3.200 3 0 t3 0 q1.500 -3.200 3 0 t3 0 q1.500 -3.200 3 0 t3 0 q1.500 -3.200 3 0 t3 0 q1.500 -3.200 3 0 t3 0 q1.500 -3.200 3 0 t3 0 q1.500 -3.200 3 0 t3 0 q1.500 -3.200 3 0 t3 0 q1.500 -3.200 3 0 t3 0 q1.500 -3.200 3 0 t3 0 q1.500 -3.200 3 0 t3 0 q1.500 -3.200 3 0 t3 0 q1.500 -3.200 3 0 t3 0 q1.500 -3.200 3 0 t3 0 q1.500 -3.200 3 0 t3 0" stroke="#ff3434" stroke-width="1.500"/></svg>
<span class="t" style="left:1566.0px;top:888.6px;font-size:13px;color:#111;letter-spacing:-0.005px;"><span style="color:#111;">Parent </span><span style="color:#111;background:#cfcfcf;font-style:italic;">noattendancep2</span><span style="color:#111;">@mailinator.com</span></span>
<svg class="b" style="left:1606.9px;top:899.7px;overflow:hidden" width="94.2" height="7" viewBox="0 -3.500 94.2 7" fill="none"><path d="M0 0 q1.500 -3.200 3 0 t3 0 q1.500 -3.200 3 0 t3 0 q1.500 -3.200 3 0 t3 0 q1.500 -3.200 3 0 t3 0 q1.500 -3.200 3 0 t3 0 q1.500 -3.200 3 0 t3 0 q1.500 -3.200 3 0 t3 0 q1.500 -3.200 3 0 t3 0 q1.500 -3.200 3 0 t3 0 q1.500 -3.200 3 0 t3 0 q1.500 -3.200 3 0 t3 0 q1.500 -3.200 3 0 t3 0 q1.500 -3.200 3 0 t3 0 q1.500 -3.200 3 0 t3 0 q1.500 -3.200 3 0 t3 0 q1.500 -3.200 3 0 t3 0 q1.500 -3.200 3 0 t3 0" stroke="#ff3434" stroke-width="1.500"/></svg>
<div class="b" style="left:1920px;top:0px;width:1614px;height:151px;background:#2b2b2b;"></div>
<div class="b" style="left:1920px;top:50px;width:1620px;height:101px;background:#3c3c3c;border-radius:10px 0 0 0;"></div>
<div class="b" style="left:1928px;top:8px;width:35px;height:34px;background:#3c3c3c;border-radius:10px;"></div>
<svg class="b" style="left:1935.5px;top:15.0px;" width="20" height="20" viewBox="0 0 24 24" fill="#e3e3e3"><path d="M16.59 8.59L12 13.17 7.41 8.59 6 10l6 6 6-6z"/></svg>
<svg class="b" style="left:1958px;top:7px" width="316" height="43" viewBox="0 0 316 43"><path d="M0 43 Q12 43 12 31 V12 Q12 0 24 0 H291 Q303 0 303 12 V31 Q303 43 315 43 Z" fill="#3c3c3c"/></svg>
<svg class="b" style="left:1978.5px;top:15.5px" width="23" height="19" viewBox="0 0 20 16"><path d="M3.500 2.500 Q1 8 3.500 13.500" stroke="#3d86a8" stroke-width="1.500" fill="none"/><path d="M5.500 10.500 l1.100-4.500 1.100 4.500 1.100-4.500 1.100 4.500 1.100-4.500 1.100 4.500 1.100-4.500 1.100 4.500" stroke="#aab4be" stroke-width=".9" fill="none"/><path d="M17.500 3.500 l-1.800 8" stroke="#aab4be" stroke-width=".9"/></svg>
<span class="t" style="left:2010.0px;top:17.6px;font-size:15px;color:#e3e3e3;letter-spacing:-0.188px;">Calimatic</span>
<svg class="b" style="left:2231.0px;top:16.0px;" width="18" height="18" viewBox="0 0 24 24" fill="#e3e3e3"><path d="M19 6.41L17.59 5 12 10.59 6.41 5 5 6.41 10.59 12 5 17.59 6.41 19 12 13.41 17.59 19 19 17.59 13.41 12z"/></svg>
<svg class="b" style="left:2275.0px;top:14.0px;" width="22" height="22" viewBox="0 0 24 24" fill="#e3e3e3"><path d="M19 13h-6v6h-2v-6H5v-2h6V5h2v6h6v2z"/></svg>
<div class="b" style="left:3311px;top:-4px;width:118px;height:27.5px;background:#1d1d1d;border-radius:5px;"></div>
<svg class="b" style="left:3315px;top:4px" width="15" height="15" viewBox="0 0 15 15"><circle cx="7.500" cy="7.500" r="6.300" fill="none" stroke="#ff2a2a" stroke-width="1.200"/><circle cx="7.500" cy="7.500" r="4.300" fill="#ff1010"/></svg>
<span class="t" style="left:3335.5px;top:-0.5px;font-size:22px;color:#fff;transform:scaleX(0.8252);transform-origin:0 50%;">screen</span>
<span class="t" style="left:3394.5px;top:-0.5px;font-size:22px;color:#fff;transform:scaleX(0.8344);transform-origin:0 50%;-webkit-text-stroke:.6px #fff;">rec</span>
<svg class="b" style="left:1935.0px;top:66.0px;" width="24" height="24" viewBox="0 0 24 24" fill="#e3e3e3"><path d="M20 11H7.83l5.59-5.59L12 4l-8 8 8 8 1.41-1.41L7.83 13H20v-2z"/></svg>
<svg class="b" style="left:1980.0px;top:66.0px;" width="24" height="24" viewBox="0 0 24 24" fill="#8a8a8a"><path d="M12 4l-1.41 1.41L16.17 11H4v2h12.17l-5.58 5.59L12 20l8-8z"/></svg>
<svg class="b" style="left:2025.0px;top:66.0px;" width="24" height="24" viewBox="0 0 24 24" fill="#e3e3e3"><path d="M17.65 6.35C16.2 4.9 14.21 4 12 4c-4.42 0-7.99 3.58-7.99 8s3.57 8 7.99 8c3.73 0 6.84-2.55 7.73-6h-2.08c-.82 2.33-3.04 4-5.65 4-3.31 0-6-2.69-6-6s2.69-6 6-6c1.66 0 3.14.69 4.22 1.78L13 11h7V4l-2.35 2.35z"/></svg>
<div class="b" style="left:2070px;top:58.3px;width:1500px;height:41.7px;background:#282828;border-radius:21px 0 0 21px;"></div>
<div class="b" style="left:2077px;top:64.5px;width:29px;height:29px;background:#3c3c3c;border-radius:15px;"></div>
<svg class="b" style="left:2083px;top:71px" width="17" height="16" viewBox="0 0 14 14" fill="none" stroke="#e3e3e3" stroke-width="1.400"><circle cx="3.500" cy="4" r="1.800"/><path d="M7.500 4 H13"/><circle cx="10.500" cy="10" r="1.800"/><path d="M1 10 H6.500"/></svg>
<span class="t" style="left:2117.0px;top:71.7px;font-size:17.5px;color:#e3e3e3;letter-spacing:0.069px;">portalv3.calibermatrix.com/#/attendance</span>
<svg class="b" style="left:1933.0px;top:115.0px" width="20" height="20" viewBox="0 0 16 16" fill="none" stroke="#2f7de1" stroke-width="2" stroke-linecap="round"><path d="M12.500 2.800 C9.500 1.500 7 3 7 6.500 V15"/><path d="M3.500 8.200 H11.500"/></svg>
<span class="t" style="left:1962.0px;top:117.0px;font-size:15px;color:#e3e3e3;letter-spacing:-0.263px;">FlowHCM</span>
<svg class="b" style="left:2047.0px;top:115.0px" width="20" height="20" viewBox="0 0 16 16" fill="none" stroke="#1a1a1a" stroke-width="1.100"><circle cx="8" cy="8" r="6.800"/><path d="M8 1.500 L13.500 4.800 V11.200 L8 14.500 L2.500 11.200 V4.800z"/><path d="M8 4.500 L11 6.300 V9.700 L8 11.500 L5 9.700 V6.300z"/><path d="M2.500 4.800 L8 8 M13.500 4.800 L8 8 M8 14.500 V8"/></svg>
<span class="t" style="left:2075.0px;top:117.0px;font-size:15px;color:#e3e3e3;letter-spacing:-0.790px;">ChatGPT</span>
<svg class="b" style="left:2152.0px;top:115.0px" width="20" height="20" viewBox="0 0 16 16"><defs><linearGradient id="cpa2162" x1="0" y1="0" x2="0" y2="1"><stop offset="0" stop-color="#2b7df0"/><stop offset=".6" stop-color="#33c1a0"/><stop offset="1" stop-color="#d3d84a"/></linearGradient><linearGradient id="cpb2162" x1="0" y1="0" x2="0" y2="1"><stop offset="0" stop-color="#a45cf5"/><stop offset=".55" stop-color="#f0508a"/><stop offset="1" stop-color="#f9a040"/></linearGradient></defs><path d="M5.500 1.500 c-1.200 0-2 .800-2.400 2 l-2 6.500 c-.600 2 .400 4 2.400 4 h2.500 l3-9.800 c-.400-1.500-1.200-2.700-3.500-2.700z" fill="url(#cpa2162)"/><path d="M10.500 14.500 c1.200 0 2-.800 2.400-2 l2-6.500 c.600-2-.400-4-2.400-4 h-2.500 l-3 9.800 c.400 1.500 1.200 2.700 3.500 2.700z" fill="url(#cpb2162)"/><path d="M5.500 1.500 h4 c1.200 0 1.800 .700 2.100 1.700 l.600 2 h-3 l-.600-2 c-.300-1-.900-1.700-3.100-1.700z" fill="#2b7df0"/><path d="M10.500 14.500 h-4 c-1.200 0-1.800-.700-2.100-1.700 l-.600-2 h3 l.600 2 c.300 1 .900 1.700 3.100 1.700z" fill="#f7903c"/></svg>
<span class="t" style="left:2180.0px;top:117.0px;font-size:15px;color:#e3e3e3;letter-spacing:0.185px;">Copilot</span>
<svg class="b" style="left:2249.0px;top:115.0px" width="20" height="20" viewBox="0 0 20 20"><defs><linearGradient id="cgc13" x1="0" y1="0" x2="0" y2="1"><stop offset="0" stop-color="#22cdea"/><stop offset="1" stop-color="#0a84a6"/></linearGradient><radialGradient id="cgs13" cx=".4" cy=".4" r=".7"><stop offset="0" stop-color="#ffffff"/><stop offset=".7" stop-color="#e9dcdc"/><stop offset="1" stop-color="#8d9399"/></radialGradient></defs><path fill-rule="evenodd" d="M9.500 1 a9 9 0 1 0 0.001 0z M11.300 2.500 a7.200 7.200 0 1 1 -0.001 0z" fill="url(#cgc13)"/><path d="M13 1.800 A9 9 0 0 1 18.400 8 L20 10 L18.400 13 A9 9 0 0 1 15 17.200 L20 20 L20 0z" fill="none"/><circle cx="11.700" cy="9.600" r="6.700" fill="url(#cgs13)"/><path d="M9 6.500 l3-1.500 2.500 1.500 -1 3 -2.500 .800 -2-1.800z M13 11 l3-.500 .500 2.500 -2.500 1.500z M8.500 11 l1.500 .500 .500 2 -1.500-.500z" fill="#6d747b" opacity=".85"/></svg>
<span class="t" style="left:2276.0px;top:117.0px;font-size:15px;color:#e3e3e3;letter-spacing:-0.206px;">Board</span>
<svg class="b" style="left:2336.0px;top:115.0px" width="20" height="20" viewBox="0 0 20 20"><defs><linearGradient id="cgc14" x1="0" y1="0" x2="0" y2="1"><stop offset="0" stop-color="#22cdea"/><stop offset="1" stop-color="#0a84a6"/></linearGradient><radialGradient id="cgs14" cx=".4" cy=".4" r=".7"><stop offset="0" stop-color="#ffffff"/><stop offset=".7" stop-color="#e9dcdc"/><stop offset="1" stop-color="#8d9399"/></radialGradient></defs><path fill-rule="evenodd" d="M9.500 1 a9 9 0 1 0 0.001 0z M11.300 2.500 a7.200 7.200 0 1 1 -0.001 0z" fill="url(#cgc14)"/><path d="M13 1.800 A9 9 0 0 1 18.400 8 L20 10 L18.400 13 A9 9 0 0 1 15 17.200 L20 20 L20 0z" fill="none"/><circle cx="11.700" cy="9.600" r="6.700" fill="url(#cgs14)"/><path d="M9 6.500 l3-1.500 2.500 1.500 -1 3 -2.500 .800 -2-1.800z M13 11 l3-.500 .500 2.500 -2.500 1.500z M8.500 11 l1.500 .500 .500 2 -1.500-.500z" fill="#6d747b" opacity=".85"/></svg>
<span class="t" style="left:2364.0px;top:117.0px;font-size:15px;color:#e3e3e3;letter-spacing:-0.232px;">Demo Dev</span>
<svg class="b" style="left:2451.0px;top:115.0px" width="24" height="20" viewBox="0 0 20 16"><path d="M3.500 2.500 Q1 8 3.500 13.500" stroke="#3d86a8" stroke-width="1.500" fill="none"/><path d="M5.500 10.500 l1.100-4.500 1.100 4.500 1.100-4.500 1.100 4.500 1.100-4.500 1.100 4.500 1.100-4.500 1.100 4.500" stroke="#aab4be" stroke-width=".9" fill="none"/><path d="M17.500 3.500 l-1.800 8" stroke="#aab4be" stroke-width=".9"/></svg>
<span class="t" style="left:2481.0px;top:117.0px;font-size:15px;color:#e3e3e3;letter-spacing:-0.582px;">SMAVY V3</span>
<svg class="b" style="left:2569.0px;top:115.0px" width="24" height="20" viewBox="0 0 20 16"><path d="M1 4 H4.200 L6 10 L7.800 4 H10.200 L12 10 L13.800 4 H16.500 L13.300 13.500 H10.800 L9 8 L7.200 13.500 H4.700z" fill="#0aa86a"/><path d="M16.500 1.500 h2 l-1 1.200 c1.200 0 1.200 1.800-.2 1.800 c-.6 0-1-.3-1.100-.7" stroke="#0aa86a" stroke-width=".7" fill="none"/></svg>
<span class="t" style="left:2599.0px;top:117.0px;font-size:15px;color:#e3e3e3;letter-spacing:-0.713px;">HTML EDITOR</span>
<svg class="b" style="left:2713.0px;top:115.0px" width="20" height="20" viewBox="0 0 20 20"><defs><linearGradient id="cgc15" x1="0" y1="0" x2="0" y2="1"><stop offset="0" stop-color="#22cdea"/><stop offset="1" stop-color="#0a84a6"/></linearGradient><radialGradient id="cgs15" cx=".4" cy=".4" r=".7"><stop offset="0" stop-color="#ffffff"/><stop offset=".7" stop-color="#e9dcdc"/><stop offset="1" stop-color="#8d9399"/></radialGradient></defs><path fill-rule="evenodd" d="M9.500 1 a9 9 0 1 0 0.001 0z M11.300 2.500 a7.200 7.200 0 1 1 -0.001 0z" fill="url(#cgc15)"/><path d="M13 1.800 A9 9 0 0 1 18.400 8 L20 10 L18.400 13 A9 9 0 0 1 15 17.200 L20 20 L20 0z" fill="none"/><circle cx="11.700" cy="9.600" r="6.700" fill="url(#cgs15)"/><path d="M9 6.500 l3-1.500 2.500 1.500 -1 3 -2.500 .800 -2-1.800z M13 11 l3-.500 .500 2.500 -2.500 1.500z M8.500 11 l1.500 .500 .500 2 -1.500-.500z" fill="#6d747b" opacity=".85"/></svg>
<span class="t" style="left:2740.0px;top:117.0px;font-size:15px;color:#e3e3e3;letter-spacing:-0.335px;">Demo - PROD</span>
<svg class="b" style="left:2852.5px;top:115.0px" width="22" height="20" viewBox="0 0 18 16" fill="none"><path d="M2 1.500 L9 14 L16 1.500" stroke="#ffffff" stroke-width="3.400" stroke-linejoin="miter"/><path d="M3.500 1.500 L9 11.500 L14.500 1.500" stroke="#5b2bbf" stroke-width="1.100"/><path d="M7 5 L9.500 10" stroke="#ec407a" stroke-width="1.200"/></svg>
<span class="t" style="left:2881.0px;top:117.0px;font-size:15px;color:#e3e3e3;letter-spacing:-0.161px;">CLient live page</span>
<svg class="b" style="left:3008.0px;top:115.0px" width="20" height="20" viewBox="0 0 16 16"><rect width="16" height="16" rx="2.500" fill="#4285f4"/><path d="M3.500 5 H12.500 M3.500 8 H12.500 M3.500 11 H9.500" stroke="#fff" stroke-width="1.700"/></svg>
<span class="t" style="left:3035.0px;top:117.0px;font-size:15px;color:#e3e3e3;letter-spacing:-0.156px;">Google Docs</span>
<svg class="b" style="left:3139.5px;top:114.5px" width="21" height="21" viewBox="0 0 24 24" fill="#e3e3e3"><path d="M12 2C6.48 2 2 6.48 2 12s4.48 10 10 10 10-4.48 10-10S17.52 2 12 2zm-1 17.93c-3.95-.49-7-3.85-7-7.93 0-.62.08-1.21.21-1.79L9 15v1c0 1.1.9 2 2 2v1.93zm6.9-2.54c-.26-.81-1-1.39-1.9-1.39h-1v-3c0-.55-.45-1-1-1H8v-2h2c.55 0 1-.45 1-1V7h2c1.1 0 2-.9 2-2v-.41c2.93 1.19 5 4.06 5 7.41 0 2.08-.8 3.97-2.1 5.39z"/></svg>
<span class="t" style="left:3167.0px;top:117.0px;font-size:15px;color:#e3e3e3;letter-spacing:-0.419px;">Faisal Org</span>
<svg class="b" style="left:3254.0px;top:115.0px" width="20" height="20" viewBox="0 0 16 16"><rect width="16" height="16" rx="2.500" fill="#23a566"/><path d="M3 6.200 H13 M7.200 3 V13.500" stroke="#fff" stroke-width="2"/></svg>
<span class="t" style="left:3281.0px;top:117.0px;font-size:15px;color:#e3e3e3;letter-spacing:-0.720px;">Test Cases</span>
<svg class="b" style="left:3369.0px;top:115.0px" width="20" height="20" viewBox="0 0 16 16"><rect width="16" height="16" rx="2.500" fill="#23a566"/><path d="M3 6.200 H13 M7.200 3 V13.500" stroke="#fff" stroke-width="2"/></svg>
<span class="t" style="left:3396.0px;top:117.0px;font-size:15px;color:#e3e3e3;letter-spacing:-1.155px;">BUGS/ISSUES</span>
<div class="b" style="left:1920px;top:150.5px;width:1607px;height:870px;background:#fff;"></div>
<div class="b" style="left:3527px;top:150.5px;width:7px;height:870px;background:#2b2b2b;"></div>
<div class="b" style="left:1920px;top:150.5px;width:1607px;height:54px;background:#1572c6;"></div>
<svg class="b" style="left:1930.0px;top:167.0px" width="23.5" height="23.5" viewBox="0 0 20 20"><defs><linearGradient id="cgc16" x1="0" y1="0" x2="0" y2="1"><stop offset="0" stop-color="#22cdea"/><stop offset="1" stop-color="#0a84a6"/></linearGradient><radialGradient id="cgs16" cx=".4" cy=".4" r=".7"><stop offset="0" stop-color="#ffffff"/><stop offset=".7" stop-color="#e9dcdc"/><stop offset="1" stop-color="#8d9399"/></radialGradient></defs><path fill-rule="evenodd" d="M9.500 1 a9 9 0 1 0 0.001 0z M11.300 2.500 a7.200 7.200 0 1 1 -0.001 0z" fill="url(#cgc16)"/><path d="M13 1.800 A9 9 0 0 1 18.400 8 L20 10 L18.400 13 A9 9 0 0 1 15 17.200 L20 20 L20 0z" fill="none"/><circle cx="11.700" cy="9.600" r="6.700" fill="url(#cgs16)"/><path d="M9 6.500 l3-1.500 2.500 1.500 -1 3 -2.500 .800 -2-1.800z M13 11 l3-.500 .500 2.500 -2.500 1.500z M8.500 11 l1.500 .500 .500 2 -1.500-.500z" fill="#6d747b" opacity=".85"/></svg>
<span class="t" style="left:1958.0px;top:173.2px;font-size:15px;color:#ffffff;transform:scaleX(1.2673);transform-origin:0 50%;-webkit-text-stroke:0.53px #ffffff;">CALIMATIC</span>
<span class="t" style="left:2056.5px;top:166.2px;font-size:9px;color:#ffffff;">®</span>
<span class="t" style="left:2086.0px;top:170.1px;font-size:14px;color:rgba(255,255,255,.78);font-weight:500;letter-spacing:0.389px;">Dashboard</span>
<span class="t" style="left:2182.0px;top:170.1px;font-size:14px;color:rgba(255,255,255,.78);font-weight:500;letter-spacing:0.107px;">Boards</span>
<span class="t" style="left:2252.0px;top:170.1px;font-size:14px;color:rgba(255,255,255,.78);font-weight:500;letter-spacing:0.463px;">Admin</span>
<span class="t" style="left:2318.0px;top:170.1px;font-size:14px;color:rgba(255,255,255,.78);font-weight:500;letter-spacing:0.253px;">Franchises</span>
<span class="t" style="left:2413.0px;top:170.1px;font-size:14px;color:rgba(255,255,255,.78);font-weight:500;letter-spacing:0.266px;">Courses</span>
<span class="t" style="left:2491.0px;top:170.1px;font-size:14px;color:rgba(255,255,255,.78);font-weight:500;letter-spacing:0.531px;">Curriculum</span>
<span class="t" style="left:2588.0px;top:170.1px;font-size:14px;color:rgba(255,255,255,.78);font-weight:500;letter-spacing:0.365px;">Events</span>
<span class="t" style="left:2657.0px;top:170.1px;font-size:14px;color:rgba(255,255,255,.78);font-weight:500;letter-spacing:0.260px;">Partners</span>
<span class="t" style="left:2736.0px;top:170.1px;font-size:14px;color:rgba(255,255,255,.78);font-weight:500;letter-spacing:0.234px;">Families</span>
<span class="t" style="left:2814.0px;top:170.1px;font-size:14px;color:rgba(255,255,255,.78);font-weight:500;letter-spacing:0.592px;">Students</span>
<span class="t" style="left:2898.0px;top:170.1px;font-size:14px;color:rgba(255,255,255,.78);font-weight:500;letter-spacing:0.691px;">Staff</span>
<span class="t" style="left:2958.0px;top:170.1px;font-size:14px;color:rgba(255,255,255,.78);font-weight:500;letter-spacing:-0.630px;">CRM</span>
<span class="t" style="left:3018.0px;top:170.1px;font-size:14px;color:rgba(255,255,255,.78);font-weight:500;letter-spacing:0.203px;">Parties</span>
<span class="t" style="left:3087.0px;top:170.1px;font-size:14px;color:rgba(255,255,255,.78);font-weight:500;letter-spacing:0.424px;">Reports</span>
<span class="t" style="left:3163.0px;top:170.1px;font-size:14px;color:rgba(255,255,255,.78);font-weight:500;letter-spacing:0.219px;">Financial</span>
<svg class="b" style="left:3377.5px;top:168.5px;" width="17" height="17" viewBox="0 0 24 24" fill="rgba(255,255,255,.85)"><path d="M12 22c1.100 0 2-.9 2-2h-4c0 1.100.890 2 2 2zm6-6v-5c0-3.070-1.640-5.640-4.500-6.320V4c0-.830-.670-1.500-1.500-1.500s-1.500.670-1.500 1.500v.680C7.630 5.360 6 7.920 6 11v5l-2 2v1h16v-1l-2-2z"/></svg>
<div class="b" style="left:3412px;top:161px;width:1px;height:33px;background:rgba(255,255,255,.55);"></div>
<div class="b" style="left:3433px;top:170px;width:14px;height:14px;background:rgba(255,255,255,.85);border-radius:7px;"></div>
<span class="t" style="left:3436.9px;top:171.7px;font-size:10px;color:#1572c6;font-weight:700;">?</span>
<div class="b" style="left:3466px;top:161px;width:1px;height:33px;background:rgba(255,255,255,.55);"></div>
<svg class="b" style="left:3478px;top:162px" width="32" height="32" viewBox="0 0 32 32"><defs><clipPath id="uav"><circle cx="16" cy="16" r="16"/></clipPath></defs><circle cx="16" cy="16" r="16" fill="#d5dbe6"/><g clip-path="url(#uav)"><path d="M2 32 Q3 21.500 16 21.500 Q29 21.500 30 32z" fill="#1f2a3c"/><path d="M12.500 21.500 L16 27 L19.500 21.500z" fill="#fff"/><path d="M15.200 23 L16 31 L16.800 23z" fill="#c62828"/><path d="M9.800 9 Q9.500 4 13 2.500 Q11.500 6 11.500 10z M22.200 9 Q22.500 4 19 2.500 Q20.500 6 20.500 10z" fill="#2a1c14"/><ellipse cx="16" cy="10.500" rx="5.400" ry="7.800" fill="#f2d3b8"/><path d="M10.600 12.500 Q10.800 20.500 16 21 Q21.200 20.500 21.400 12.500 Q20 16 16 15.500 Q12 16 10.600 12.500z" fill="#2a1c14"/><path d="M13.500 16.800 Q16 15.800 18.500 16.800 Q16 18 13.500 16.800z" fill="#f2d3b8"/></g></svg>
<div class="b" style="left:1920px;top:204.5px;width:298px;height:816px;background:#f8f9fb;"></div>
<div class="b" style="left:1920px;top:204.5px;width:298px;height:60.5px;background:linear-gradient(180deg,#ffffff 30%,#f8f9fb);"></div>
<div class="b" style="left:2218.5px;top:204.5px;width:1px;height:816px;background:#e5e7eb;"></div>
<div class="b" style="left:1920px;top:265px;width:298px;height:1px;background:#e5e7eb;"></div>
<span class="t" style="left:1932.0px;top:227.0px;font-size:17px;color:#1a1a1a;letter-spacing:0.398px;-webkit-text-stroke:.6px #1a1a1a;">Attendance</span>
<div class="b" style="left:2174px;top:220px;width:32px;height:32px;background:#fff;border-radius:16px;box-shadow:0 1px 3px rgba(0,0,0,.06);"></div>
<svg class="b" style="left:2178.0px;top:224.0px;" width="24" height="24" viewBox="0 0 24 24" fill="#1a1a1a"><path d="M15.41 7.41L14 6l-6 6 6 6 1.410-1.410L10.830 12z"/></svg>
<div class="b" style="left:1932px;top:278px;width:275px;height:39.5px;background:#f5f5f5;border-radius:7px;border:1px solid #e3e3e3;box-sizing:border-box;"></div>
<svg class="b" style="left:1940.5px;top:288.0px;" width="20" height="20" viewBox="0 0 24 24" fill="#6b7280"><path d="M15.5 14h-.79l-.28-.27C15.41 12.59 16 11.11 16 9.5 16 5.91 13.09 3 9.5 3S3 5.91 3 9.5 5.91 16 9.5 16c1.61 0 3.09-.59 4.23-1.57l.27.28v.79l5 4.99L20.49 19l-4.99-5zm-6 0C7.01 14 5 11.99 5 9.5S7.01 5 9.5 5 14 7.01 14 9.5 11.99 14 9.5 14z"/></svg>
<span class="t" style="left:1969.0px;top:291.1px;font-size:13px;color:#7b8190;letter-spacing:-0.226px;">Search...</span>
<div class="b" style="left:1928px;top:332px;width:283px;height:43.5px;background:#1572c6;border-radius:8px;box-shadow:0 2px 4px rgba(21,114,198,.3);"></div>
<svg class="b" style="left:1944px;top:344px" width="17" height="19" viewBox="0 0 17 19"><path d="M4 0 h2 v2 h5 V0 h2 v2 h2 q2 0 2 2 v2 H0 V4 q0-2 2-2 h2z M0 7.500 H17 V17 q0 2-2 2 H2 q-2 0-2-2z" fill="#fff"/><g fill="#1572c6"><rect x="3" y="10" width="2.500" height="2.200"/><rect x="7.200" y="10" width="2.500" height="2.200"/><rect x="11.500" y="10" width="2.500" height="2.200"/><rect x="3" y="14" width="2.500" height="2.200"/><rect x="7.200" y="14" width="2.500" height="2.200"/><rect x="11.500" y="14" width="2.500" height="2.200"/></g></svg>
<span class="t" style="left:1975.0px;top:346.1px;font-size:14px;color:#fff;font-weight:700;letter-spacing:-0.163px;">By Date</span>
<svg class="b" style="left:1941px;top:391px" width="23" height="18" viewBox="0 0 23 18" fill="#3a3f47"><circle cx="11.500" cy="5" r="3.600"/><circle cx="4" cy="4" r="2.600"/><circle cx="19" cy="4" r="2.600"/><path d="M5 17 Q5 10 11.500 10 Q18 10 18 17z"/><path d="M0 13 Q0 8 4.500 8 Q6 8 7 9 Q4.500 10.500 4 13z M23 13 Q23 8 18.500 8 Q17 8 16 9 Q18.500 10.500 19 13z"/></svg>
<span class="t" style="left:1975.0px;top:393.1px;font-size:14px;color:#3a3f47;letter-spacing:0.096px;">By Class</span>
<svg class="b" style="left:1945px;top:438px" width="16" height="19" viewBox="0 0 16 19" fill="#3a3f47"><path d="M3 0 H14.500 Q16 0 16 1.500 V13.500 Q16 14.500 15 14.800 V17 Q16 17.200 16 18 Q16 19 15 19 H3 Q0 19 0 16 V3 Q0 0 3 0z M3 15 Q2 15 2 16 Q2 17 3 17 H13 V15z"/><path d="M4 4.500 H12 M4 7.500 H12" stroke="#f8f9fb" stroke-width="1.200"/></svg>
<span class="t" style="left:1975.0px;top:441.1px;font-size:14px;color:#3a3f47;letter-spacing:0.293px;">By Course</span>
<svg class="b" style="left:1944px;top:487px" width="17" height="19" viewBox="0 0 17 19" fill="#3a3f47"><circle cx="8.500" cy="5" r="5"/><path d="M0 19 Q0 11.500 8.500 11.500 Q17 11.500 17 19z"/></svg>
<span class="t" style="left:1975.0px;top:489.6px;font-size:14px;color:#3a3f47;letter-spacing:0.450px;">By Student</span>
<span class="t" style="left:2234.0px;top:221.9px;font-size:20px;color:#1a1a1a;letter-spacing:0.284px;-webkit-text-stroke:.7px #1a1a1a;">Attendance By Date</span>
<div class="b" style="left:2219px;top:256.5px;width:1308px;height:1px;background:#e5e7eb;"></div>
<div class="b" style="left:2727px;top:215.5px;width:114px;height:34px;background:#d1fae5;border-radius:8px;"></div>
<div class="b" style="left:2739px;top:225px;width:14px;height:14px;background:#047857;border-radius:7px;"></div>
<svg class="b" style="left:2742px;top:228px" width="8" height="8" viewBox="0 0 8 8" fill="none" stroke="#fff" stroke-width="1.500"><path d="M1.200 4.200 L3.200 6 L6.800 2"/></svg>
<span class="t" style="left:2762.0px;top:224.6px;font-size:15px;color:#047857;font-weight:700;letter-spacing:0.656px;">0</span>
<span class="t" style="left:2779.0px;top:225.1px;font-size:14px;color:#6b7280;letter-spacing:0.250px;">Present</span>
<div class="b" style="left:2849px;top:217px;width:1px;height:30px;background:#e5e7eb;"></div>
<div class="b" style="left:2858px;top:215.5px;width:111px;height:34px;background:#fee2e2;border-radius:8px;"></div>
<div class="b" style="left:2870px;top:225px;width:14px;height:14px;background:#dc2626;border-radius:7px;"></div>
<svg class="b" style="left:2873.5px;top:228.500px" width="7" height="7" viewBox="0 0 7 7" fill="none" stroke="#fff" stroke-width="1.500"><path d="M1.200 1.200 L5.800 5.800 M5.800 1.200 L1.200 5.800"/></svg>
<span class="t" style="left:2893.0px;top:224.6px;font-size:15px;color:#dc2626;font-weight:700;letter-spacing:0.656px;">0</span>
<span class="t" style="left:2910.0px;top:225.1px;font-size:14px;color:#6b7280;letter-spacing:0.568px;">Absent</span>
<div class="b" style="left:2977px;top:217px;width:1px;height:30px;background:#e5e7eb;"></div>
<div class="b" style="left:2986px;top:215.5px;width:143px;height:34px;background:#fef3c7;border-radius:8px;"></div>
<div class="b" style="left:2998px;top:225px;width:14px;height:14px;background:#d97706;border-radius:7px;"></div>
<div class="b" style="left:3002px;top:231.2px;width:6px;height:1.8px;background:#fff;"></div>
<span class="t" style="left:3020.0px;top:224.6px;font-size:15px;color:#d97706;font-weight:700;letter-spacing:-0.677px;">149</span>
<span class="t" style="left:3051.0px;top:225.1px;font-size:14px;color:#6b7280;letter-spacing:0.051px;">Unmarked</span>
<div class="b" style="left:3136px;top:216px;width:199px;height:33px;background:#fff;border-radius:6px;border:1px solid #cbd5e1;box-sizing:border-box;"></div>
<div class="b" style="left:3300px;top:216px;width:35px;height:33px;background:#f8fafc;border-radius:0 6px 6px 0;border:1px solid #cbd5e1;box-sizing:border-box;"></div>
<span class="t" style="left:3148.0px;top:225.6px;font-size:14px;color:#374151;letter-spacing:0.237px;">2025-12-22</span>
<svg class="b" style="left:3310px;top:224px" width="15" height="17" viewBox="0 0 15 17" fill="none" stroke="#1f2937" stroke-width="1.500"><rect x=".8" y="2.500" width="13.400" height="13.500" rx="2"/><path d="M.8 6.800 H14.200 M4.200 .5 V4 M10.800 .5 V4"/></svg>
<div class="b" style="left:3343px;top:216px;width:170px;height:33px;background:#1572c6;border-radius:6px;"></div>
<svg class="b" style="left:3358px;top:225px" width="16" height="16" viewBox="0 0 16 16" fill="none" stroke="#fff" stroke-width="2.200"><path d="M2.500 8.500 L6.200 12 L13.500 3.500"/></svg>
<span class="t" style="left:3380.0px;top:225.6px;font-size:14px;color:#fff;font-weight:700;letter-spacing:-0.356px;">Submit Attendance</span>
<div class="b" style="left:2236.0px;top:274px;width:415.8px;height:100px;background:#fff;border-radius:9px;border:1px solid #cfe0f3;box-sizing:border-box;"></div>
<div class="b" style="left:2251.0px;top:298px;width:54px;height:54px;background:#d1fae5;border-radius:8px;"></div>
<div class="b" style="left:2260.0px;top:306.5px;width:36px;height:36px;background:#10b981;border-radius:18px;"></div>
<svg class="b" style="left:2270.0px;top:316.5px" width="16" height="16" viewBox="0 0 16 16" fill="none" stroke="#fff" stroke-width="2.400" stroke-linecap="round" stroke-linejoin="round"><path d="M3.500 8.500 L6.800 11.500 L12.500 5"/></svg>
<span class="t" style="left:2319.0px;top:288.4px;font-size:19px;color:#1a1a1a;font-weight:500;-webkit-text-stroke:.3px #1a1a1a;">0</span>
<span class="t" style="left:2319.0px;top:314.6px;font-size:13px;color:#1f2937;letter-spacing:0.598px;">Present</span>
<div class="b" style="left:2319.0px;top:336px;width:36px;height:24px;background:#dcfce7;border-radius:12px;"></div>
<span class="t" style="left:2327.2px;top:341.3px;font-size:13.5px;color:#1f2937;">0%</span>
<div class="b" style="left:2624.5px;top:278.5px;width:23px;height:23px;background:#e5e7eb;border-radius:11.5px;"></div>
<div class="b" style="left:2628.5px;top:282.5px;width:15px;height:15px;background:#1572c6;border-radius:7.5px;"></div>
<span class="t" style="left:2634.6px;top:284.7px;font-size:10px;color:#fff;font-weight:700;font-family:'Liberation Serif', serif;">i</span>
<div class="b" style="left:2666.0px;top:274px;width:415.8px;height:100px;background:#fff;border-radius:9px;border:1px solid #cfe0f3;box-sizing:border-box;"></div>
<div class="b" style="left:2681.0px;top:298px;width:54px;height:54px;background:#fee2e2;border-radius:8px;"></div>
<div class="b" style="left:2690.0px;top:306.5px;width:36px;height:36px;background:#ef4444;border-radius:18px;"></div>
<svg class="b" style="left:2700.0px;top:316.5px" width="16" height="16" viewBox="0 0 16 16" fill="none" stroke="#fff" stroke-width="2.600" stroke-linecap="round"><path d="M4 4 L12 12 M12 4 L4 12"/></svg>
<span class="t" style="left:2749.0px;top:288.4px;font-size:19px;color:#1a1a1a;font-weight:500;-webkit-text-stroke:.3px #1a1a1a;">0</span>
<span class="t" style="left:2749.0px;top:314.6px;font-size:13px;color:#1f2937;letter-spacing:0.836px;">Absent</span>
<div class="b" style="left:2749.0px;top:336px;width:36px;height:24px;background:#dcfce7;border-radius:12px;"></div>
<span class="t" style="left:2757.2px;top:341.3px;font-size:13.5px;color:#1f2937;">0%</span>
<div class="b" style="left:3054.5px;top:278.5px;width:23px;height:23px;background:#e5e7eb;border-radius:11.5px;"></div>
<div class="b" style="left:3058.5px;top:282.5px;width:15px;height:15px;background:#1572c6;border-radius:7.5px;"></div>
<span class="t" style="left:3064.6px;top:284.7px;font-size:10px;color:#fff;font-weight:700;font-family:'Liberation Serif', serif;">i</span>
<div class="b" style="left:3094.5px;top:274px;width:415.8px;height:100px;background:#fff;border-radius:9px;border:1px solid #cfe0f3;box-sizing:border-box;"></div>
<div class="b" style="left:3109.5px;top:298px;width:54px;height:54px;background:#fef3c7;border-radius:8px;"></div>
<div class="b" style="left:3118.5px;top:306.5px;width:36px;height:36px;background:#d97706;border-radius:18px;"></div>
<div class="b" style="left:3130.5px;top:323.0px;width:12px;height:3px;background:#fff;border-radius:1.5px;"></div>
<span class="t" style="left:3177.5px;top:288.4px;font-size:19px;color:#1a1a1a;font-weight:500;-webkit-text-stroke:.3px #1a1a1a;">149</span>
<span class="t" style="left:3177.5px;top:314.6px;font-size:13px;color:#1f2937;letter-spacing:0.754px;">Unmarked</span>
<div class="b" style="left:3177.5px;top:336px;width:69px;height:24px;background:#dcfce7;border-radius:12px;"></div>
<span class="t" style="left:3187.2px;top:341.3px;font-size:13.5px;color:#1f2937;">Pending</span>
<div class="b" style="left:3483px;top:278.5px;width:23px;height:23px;background:#e5e7eb;border-radius:11.5px;"></div>
<div class="b" style="left:3487px;top:282.5px;width:15px;height:15px;background:#1572c6;border-radius:7.5px;"></div>
<span class="t" style="left:3493.1px;top:284.7px;font-size:10px;color:#fff;font-weight:700;font-family:'Liberation Serif', serif;">i</span>
<div class="b" style="left:2234px;top:399.5px;width:196px;height:32.5px;background:#fff;border-radius:6px;border:1px solid #cbd5e1;box-sizing:border-box;"></div>
<svg class="b" style="left:2242.5px;top:406.5px;" width="19" height="19" viewBox="0 0 24 24" fill="#6b7280"><path d="M15.5 14h-.79l-.28-.27C15.41 12.59 16 11.11 16 9.5 16 5.91 13.09 3 9.5 3S3 5.91 3 9.5 5.91 16 9.5 16c1.61 0 3.09-.59 4.23-1.57l.27.28v.79l5 4.99L20.49 19l-4.99-5zm-6 0C7.01 14 5 11.99 5 9.5S7.01 5 9.5 5 14 7.01 14 9.5 11.99 14 9.5 14z"/></svg>
<span class="t" style="left:2270.0px;top:408.6px;font-size:14px;color:#7b8190;letter-spacing:-0.227px;">Search</span>
<div class="b" style="left:3306px;top:398.5px;width:126.5px;height:33px;background:#f8fafc;border-radius:8px;border:1px solid #e5e7eb;box-sizing:border-box;"></div>
<svg class="b" style="left:3316px;top:408px" width="14" height="14" viewBox="0 0 24 24" fill="#374151"><path d="M19.140 12.940c.040-.300.060-.610.060-.940 0-.320-.020-.640-.070-.940l2.030-1.580c.180-.140.230-.410.120-.610l-1.920-3.320c-.120-.220-.370-.290-.590-.220l-2.390.960c-.500-.380-1.030-.700-1.620-.940l-.360-2.540c-.040-.240-.240-.410-.480-.410h-3.840c-.240 0-.430.170-.470.410l-.360 2.540c-.590.240-1.130.570-1.620.940l-2.390-.960c-.220-.080-.470 0-.590.220L2.740 8.870c-.120.210-.080.470.120.610l2.030 1.580c-.050.300-.090.630-.090.940s.020.640.070.940l-2.030 1.580c-.180.140-.230.410-.120.610l1.920 3.320c.120.220.370.290.590.220l2.390-.960c.500.380 1.030.700 1.620.940l.360 2.540c.050.240.240.410.480.410h3.840c.240 0 .440-.170.470-.410l.360-2.540c.590-.240 1.130-.560 1.620-.940l2.390.960c.220.080.470 0 .590-.220l1.920-3.320c.120-.220.070-.470-.120-.610l-2.010-1.580zM12 15.600c-1.980 0-3.600-1.620-3.600-3.600s1.620-3.600 3.600-3.600 3.600 1.620 3.600 3.600-1.620 3.600-3.600 3.600z"/></svg>
<span class="t" style="left:3337.0px;top:408.3px;font-size:13.5px;color:#1f2937;letter-spacing:0.385px;">6 columns</span>
<svg class="b" style="left:3412px;top:412px" width="10" height="6" viewBox="0 0 10 6" fill="none" stroke="#4b5563" stroke-width="1.200"><path d="M1 1 L5 5 L9 1"/></svg>
<div class="b" style="left:3440px;top:398.5px;width:32.5px;height:33px;background:#fff;border-radius:6px;border:1px solid #d1d5db;box-sizing:border-box;"></div>
<svg class="b" style="left:3448px;top:407px" width="16" height="16" viewBox="0 0 16 16" fill="none" stroke="#111827" stroke-width="1.700"><path d="M8 1.500 V10 M4.500 6.800 L8 10.300 L11.500 6.800 M1.500 11 V14 H14.500 V11"/></svg>
<div class="b" style="left:3479.5px;top:398.5px;width:33.5px;height:33px;background:#1572c6;border-radius:6px;"></div>
<svg class="b" style="left:3488px;top:407px" width="16" height="16" viewBox="0 0 16 16" fill="none" stroke="#fff" stroke-width="2"><path d="M1.500 2 H14.500 L9.500 8 V14 L6.500 12.500 V8z"/></svg>
<div class="b" style="left:2234px;top:481px;width:1285px;height:1px;background:#e5e7eb;"></div>
<div class="b" style="left:2234px;top:537px;width:1285px;height:1px;background:#e5e7eb;"></div>
<span class="t" style="left:2241.0px;top:452.1px;font-size:14px;color:#111827;letter-spacing:0.819px;-webkit-text-stroke:.55px #111827;">Student</span>
<svg class="b" style="left:2300px;top:449.5px" width="14" height="16" viewBox="0 0 13 14" fill="none" stroke="#111827" stroke-width="1.150"><path d="M3.500 13 V1.500 M1 4 L3.500 1.500 L6 4 M9.500 1 V12.500 M7 10 L9.500 12.500 L12 10"/></svg>
<span class="t" style="left:2461.5px;top:452.1px;font-size:14px;color:#111827;letter-spacing:0.397px;-webkit-text-stroke:.55px #111827;">Class</span>
<svg class="b" style="left:2504px;top:449.5px" width="14" height="16" viewBox="0 0 13 14" fill="none" stroke="#111827" stroke-width="1.150"><path d="M3.500 13 V1.500 M1 4 L3.500 1.500 L6 4 M9.500 1 V12.500 M7 10 L9.500 12.500 L12 10"/></svg>
<span class="t" style="left:2712.5px;top:452.1px;font-size:14px;color:#111827;letter-spacing:0.864px;-webkit-text-stroke:.55px #111827;">Instructor</span>
<svg class="b" style="left:2785px;top:449.5px" width="14" height="16" viewBox="0 0 13 14" fill="none" stroke="#111827" stroke-width="1.150"><path d="M3.500 13 V1.500 M1 4 L3.500 1.500 L6 4 M9.500 1 V12.500 M7 10 L9.500 12.500 L12 10"/></svg>
<span class="t" style="left:2863.5px;top:452.1px;font-size:14px;color:#111827;letter-spacing:0.602px;-webkit-text-stroke:.55px #111827;">Time</span>
<svg class="b" style="left:2902px;top:449.5px" width="14" height="16" viewBox="0 0 13 14" fill="none" stroke="#111827" stroke-width="1.150"><path d="M3.500 13 V1.500 M1 4 L3.500 1.500 L6 4 M9.500 1 V12.500 M7 10 L9.500 12.500 L12 10"/></svg>
<span class="t" style="left:3043.5px;top:452.1px;font-size:14px;color:#111827;letter-spacing:0.684px;-webkit-text-stroke:.55px #111827;">Notes</span>
<span class="t" style="left:3246.0px;top:452.1px;font-size:14px;color:#111827;letter-spacing:0.729px;-webkit-text-stroke:.55px #111827;">Mark Attendance</span>
<div class="b" style="left:2241px;top:493px;width:170.5px;height:33px;background:#fff;border-radius:6px;border:1px solid #cbd5e1;box-sizing:border-box;"></div>
<span class="t" style="left:2253.0px;top:502.1px;font-size:14px;color:#7b8190;letter-spacing:0.012px;">Type to search</span>
<svg class="b" style="left:2425.5px;top:502px" width="15" height="15" viewBox="0 0 15 15" fill="none" stroke="#4b5563" stroke-width="1.100"><path d="M1 1 H14 L9 7.500 V13.500 L6 12 V7.500z"/></svg>
<div class="b" style="left:2462px;top:493px;width:201.5px;height:33px;background:#fff;border-radius:6px;border:1px solid #cbd5e1;box-sizing:border-box;"></div>
<span class="t" style="left:2474.0px;top:502.1px;font-size:14px;color:#7b8190;letter-spacing:0.012px;">Type to search</span>
<svg class="b" style="left:2677.5px;top:502px" width="15" height="15" viewBox="0 0 15 15" fill="none" stroke="#4b5563" stroke-width="1.100"><path d="M1 1 H14 L9 7.500 V13.500 L6 12 V7.500z"/></svg>
<div class="b" style="left:2713px;top:493px;width:100.5px;height:33px;background:#fff;border-radius:6px;border:1px solid #cbd5e1;box-sizing:border-box;"></div>
<span class="t" style="left:2725.0px;top:502.1px;font-size:14px;color:#7b8190;letter-spacing:0.012px;clip-path:inset(0 16px 0 0);">Type to search</span>
<svg class="b" style="left:2827.5px;top:502px" width="15" height="15" viewBox="0 0 15 15" fill="none" stroke="#4b5563" stroke-width="1.100"><path d="M1 1 H14 L9 7.500 V13.500 L6 12 V7.500z"/></svg>
<div class="b" style="left:2863px;top:493px;width:132px;height:33px;background:#fff;border-radius:6px;border:1px solid #cbd5e1;box-sizing:border-box;"></div>
<span class="t" style="left:2875.0px;top:502.1px;font-size:14px;color:#7b8190;letter-spacing:0.012px;">Type to search</span>
<svg class="b" style="left:3008.5px;top:502px" width="15" height="15" viewBox="0 0 15 15" fill="none" stroke="#4b5563" stroke-width="1.100"><path d="M1 1 H14 L9 7.500 V13.500 L6 12 V7.500z"/></svg>
<div class="b" style="left:3246px;top:493px;width:156px;height:33px;background:#1572c6;border-radius:6px;"></div>
<span class="t" style="left:3257.5px;top:502.1px;font-size:14px;color:#fff;font-weight:500;letter-spacing:-0.037px;">Mark all present</span>
<svg class="b" style="left:3378px;top:505.500px" width="13" height="8" viewBox="0 0 13 8" fill="none" stroke="#fff" stroke-width="1.600"><path d="M1 1 L6.500 6.500 L12 1"/></svg>
<div class="b" style="left:2234px;top:588px;width:1285px;height:1px;background:#e5e7eb;"></div>
<div class="b" style="left:2248px;top:546.5px;width:32px;height:32px;background:#1572c6;border-radius:16px;"></div>
<span class="t" style="left:2254.6px;top:556.6px;font-size:13px;color:#fff;font-weight:700;letter-spacing:-.6px;">SQ</span>
<span class="t" style="left:2288.0px;top:555.7px;font-size:14px;color:#1f2937;letter-spacing:0.218px;">Sufyan Qadeer</span>
<span class="t" style="left:2469.0px;top:555.7px;font-size:14px;color:#1f2937;letter-spacing:-0.028px;">CLASSICAL MECHANICS - Classical</span>
<span class="t" style="left:2719.5px;top:555.7px;font-size:14px;color:#1f2937;letter-spacing:-0.239px;">Jamal John, Jam…</span>
<span class="t" style="left:2870.0px;top:555.7px;font-size:14px;color:#1f2937;letter-spacing:0.855px;">06:00 AM - 06:00 AM</span>
<div class="b" style="left:3051px;top:545px;width:173px;height:36px;background:#fff;border-radius:6px;border:1px solid #cbd5e1;box-sizing:border-box;"></div>
<span class="t" style="left:3064.0px;top:556.1px;font-size:14px;color:#374151;letter-spacing:0.201px;">Suyfan waddeer</span>
<div class="b" style="left:3253px;top:547.5px;width:55.5px;height:30px;background:#fff;border-radius:5px;border:1px solid #d1d5db;box-sizing:border-box;"></div>
<span class="t" style="left:3257.2px;top:555.6px;font-size:14px;color:#1f2937;letter-spacing:-0.179px;">Present</span>
<div class="b" style="left:3317px;top:547.5px;width:53.5px;height:30px;background:#fff;border-radius:5px;border:1px solid #d1d5db;box-sizing:border-box;"></div>
<span class="t" style="left:3322.2px;top:555.6px;font-size:14px;color:#1f2937;letter-spacing:-0.099px;">Absent</span>
<div class="b" style="left:3379px;top:547.5px;width:84.5px;height:30px;background:#1572c6;border-radius:5px;border:none;box-sizing:border-box;"></div>
<span class="t" style="left:3390.2px;top:555.6px;font-size:14px;color:#fff;letter-spacing:-0.030px;">Cancelled</span>
<div class="b" style="left:3468px;top:547.5px;width:33px;height:30px;background:#fff;border-radius:5px;border:1px solid #d1d5db;box-sizing:border-box;"></div>
<svg class="b" style="left:3475.0px;top:553.5px;" width="19" height="19" viewBox="0 0 24 24" fill="#111827"><path d="M12 8c1.1 0 2-.9 2-2s-.9-2-2-2-2 .9-2 2 .9 2 2 2zm0 2c-1.1 0-2 .9-2 2s.9 2 2 2 2-.9 2-2-.9-2-2-2zm0 6c-1.1 0-2 .9-2 2s.9 2 2 2 2-.9 2-2-.9-2-2-2z"/></svg>
<div class="b" style="left:2234px;top:639px;width:1285px;height:1px;background:#e5e7eb;"></div>
<div class="b" style="left:2248px;top:597.5px;width:32px;height:32px;background:#1572c6;border-radius:16px;"></div>
<span class="t" style="left:2255.3px;top:607.6px;font-size:13px;color:#fff;font-weight:700;letter-spacing:-.6px;">CL</span>
<span class="t" style="left:2288.0px;top:606.7px;font-size:14px;color:#1f2937;letter-spacing:0.438px;">Colt Lynch</span>
<span class="t" style="left:2469.0px;top:606.7px;font-size:14px;color:#1f2937;letter-spacing:-0.028px;">CLASSICAL MECHANICS - Classical</span>
<span class="t" style="left:2719.5px;top:606.7px;font-size:14px;color:#1f2937;letter-spacing:-0.239px;">Jamal John, Jam…</span>
<span class="t" style="left:2870.0px;top:606.7px;font-size:14px;color:#1f2937;letter-spacing:0.855px;">06:00 AM - 06:00 AM</span>
<div class="b" style="left:3051px;top:596px;width:173px;height:36px;background:#fff;border-radius:6px;border:1px solid #cbd5e1;box-sizing:border-box;"></div>
<span class="t" style="left:3065.0px;top:607.1px;font-size:14px;color:#6b7280;font-style:italic;letter-spacing:0.023px;">Add notes...</span>
<div class="b" style="left:3253.5px;top:598.5px;width:70.5px;height:30px;background:#fff;border-radius:5px;border:1px solid #d1d5db;box-sizing:border-box;"></div>
<span class="t" style="left:3265.2px;top:606.6px;font-size:14px;color:#1f2937;letter-spacing:-0.179px;">Present</span>
<div class="b" style="left:3332.5px;top:598.5px;width:67.0px;height:30px;background:#fff;border-radius:5px;border:1px solid #d1d5db;box-sizing:border-box;"></div>
<span class="t" style="left:3344.5px;top:606.6px;font-size:14px;color:#1f2937;letter-spacing:-0.099px;">Absent</span>
<div class="b" style="left:3408px;top:598.5px;width:33px;height:30px;background:#fff;border-radius:5px;border:1px solid #d1d5db;box-sizing:border-box;"></div>
<svg class="b" style="left:3415.0px;top:604.5px;" width="19" height="19" viewBox="0 0 24 24" fill="#111827"><path d="M12 8c1.1 0 2-.9 2-2s-.9-2-2-2-2 .9-2 2 .9 2 2 2zm0 2c-1.1 0-2 .9-2 2s.9 2 2 2 2-.9 2-2-.9-2-2-2zm0 6c-1.1 0-2 .9-2 2s.9 2 2 2 2-.9 2-2-.9-2-2-2z"/></svg>
<div class="b" style="left:2454px;top:640px;width:784px;height:50px;background:#f3f6fb;"></div>
<div class="b" style="left:2234px;top:690px;width:1285px;height:1px;background:#e5e7eb;"></div>
<div class="b" style="left:2248px;top:648.5px;width:32px;height:32px;background:#1572c6;border-radius:16px;"></div>
<span class="t" style="left:2257.5px;top:658.6px;font-size:13px;color:#fff;font-weight:700;letter-spacing:-.6px;">IR</span>
<span class="t" style="left:2288.0px;top:657.7px;font-size:14px;color:#1f2937;letter-spacing:0.304px;">Igor Richmond</span>
<span class="t" style="left:2469.0px;top:657.7px;font-size:14px;color:#1f2937;letter-spacing:-0.028px;">CLASSICAL MECHANICS - Classical</span>
<span class="t" style="left:2719.5px;top:657.7px;font-size:14px;color:#1f2937;letter-spacing:-0.239px;">Jamal John, Jam…</span>
<span class="t" style="left:2870.0px;top:657.7px;font-size:14px;color:#1f2937;letter-spacing:0.855px;">06:00 AM - 06:00 AM</span>
<div class="b" style="left:3051px;top:647px;width:173px;height:36px;background:#fff;border-radius:6px;border:1px solid #cbd5e1;box-sizing:border-box;"></div>
<span class="t" style="left:3065.0px;top:658.1px;font-size:14px;color:#6b7280;font-style:italic;letter-spacing:0.023px;">Add notes...</span>
<div class="b" style="left:3253.5px;top:649.5px;width:70.5px;height:30px;background:#fff;border-radius:5px;border:1px solid #d1d5db;box-sizing:border-box;"></div>
<span class="t" style="left:3265.2px;top:657.6px;font-size:14px;color:#1f2937;letter-spacing:-0.179px;">Present</span>
<div class="b" style="left:3332.5px;top:649.5px;width:67.0px;height:30px;background:#fff;border-radius:5px;border:1px solid #d1d5db;box-sizing:border-box;"></div>
<span class="t" style="left:3344.5px;top:657.6px;font-size:14px;color:#1f2937;letter-spacing:-0.099px;">Absent</span>
<div class="b" style="left:3408px;top:649.5px;width:33px;height:30px;background:#fff;border-radius:5px;border:1px solid #d1d5db;box-sizing:border-box;"></div>
<svg class="b" style="left:3415.0px;top:655.5px;" width="19" height="19" viewBox="0 0 24 24" fill="#111827"><path d="M12 8c1.1 0 2-.9 2-2s-.9-2-2-2-2 .9-2 2 .9 2 2 2zm0 2c-1.1 0-2 .9-2 2s.9 2 2 2 2-.9 2-2-.9-2-2-2zm0 6c-1.1 0-2 .9-2 2s.9 2 2 2 2-.9 2-2-.9-2-2-2z"/></svg>
<div class="b" style="left:2234px;top:741px;width:1285px;height:1px;background:#e5e7eb;"></div>
<div class="b" style="left:2248px;top:699.5px;width:32px;height:32px;background:#1572c6;border-radius:16px;"></div>
<span class="t" style="left:2257.9px;top:709.6px;font-size:13px;color:#fff;font-weight:700;letter-spacing:-.6px;">IS</span>
<span class="t" style="left:2288.0px;top:708.7px;font-size:14px;color:#1f2937;letter-spacing:0.430px;">Iam Sutton</span>
<span class="t" style="left:2469.0px;top:708.7px;font-size:14px;color:#1f2937;letter-spacing:-0.028px;">CLASSICAL MECHANICS - Classical</span>
<span class="t" style="left:2719.5px;top:708.7px;font-size:14px;color:#1f2937;letter-spacing:-0.239px;">Jamal John, Jam…</span>
<span class="t" style="left:2870.0px;top:708.7px;font-size:14px;color:#1f2937;letter-spacing:0.855px;">06:00 AM - 06:00 AM</span>
<div class="b" style="left:3051px;top:698px;width:173px;height:36px;background:#fff;border-radius:6px;border:1px solid #cbd5e1;box-sizing:border-box;"></div>
<span class="t" style="left:3065.0px;top:709.1px;font-size:14px;color:#6b7280;font-style:italic;letter-spacing:0.023px;">Add notes...</span>
<div class="b" style="left:3253.5px;top:700.5px;width:70.5px;height:30px;background:#fff;border-radius:5px;border:1px solid #d1d5db;box-sizing:border-box;"></div>
<span class="t" style="left:3265.2px;top:708.6px;font-size:14px;color:#1f2937;letter-spacing:-0.179px;">Present</span>
<div class="b" style="left:3332.5px;top:700.5px;width:67.0px;height:30px;background:#fff;border-radius:5px;border:1px solid #d1d5db;box-sizing:border-box;"></div>
<span class="t" style="left:3344.5px;top:708.6px;font-size:14px;color:#1f2937;letter-spacing:-0.099px;">Absent</span>
<div class="b" style="left:3408px;top:700.5px;width:33px;height:30px;background:#fff;border-radius:5px;border:1px solid #d1d5db;box-sizing:border-box;"></div>
<svg class="b" style="left:3415.0px;top:706.5px;" width="19" height="19" viewBox="0 0 24 24" fill="#111827"><path d="M12 8c1.1 0 2-.9 2-2s-.9-2-2-2-2 .9-2 2 .9 2 2 2zm0 2c-1.1 0-2 .9-2 2s.9 2 2 2 2-.9 2-2-.9-2-2-2zm0 6c-1.1 0-2 .9-2 2s.9 2 2 2 2-.9 2-2-.9-2-2-2z"/></svg>
<div class="b" style="left:2234px;top:792px;width:1285px;height:1px;background:#e5e7eb;"></div>
<div class="b" style="left:2248px;top:750.5px;width:32px;height:32px;background:#1572c6;border-radius:16px;"></div>
<span class="t" style="left:2256.1px;top:760.6px;font-size:13px;color:#fff;font-weight:700;letter-spacing:-.6px;">FF</span>
<span class="t" style="left:2288.0px;top:759.7px;font-size:14px;color:#1f2937;letter-spacing:0.691px;">fwsd fwe</span>
<span class="t" style="left:2469.0px;top:759.7px;font-size:14px;color:#1f2937;letter-spacing:-0.028px;">CLASSICAL MECHANICS - Classical</span>
<span class="t" style="left:2719.5px;top:759.7px;font-size:14px;color:#1f2937;letter-spacing:-0.239px;">Jamal John, Jam…</span>
<span class="t" style="left:2870.0px;top:759.7px;font-size:14px;color:#1f2937;letter-spacing:0.855px;">06:00 AM - 06:00 AM</span>
<div class="b" style="left:3051px;top:749px;width:173px;height:36px;background:#fff;border-radius:6px;border:1px solid #cbd5e1;box-sizing:border-box;"></div>
<span class="t" style="left:3065.0px;top:760.1px;font-size:14px;color:#6b7280;font-style:italic;letter-spacing:0.023px;">Add notes...</span>
<div class="b" style="left:3253.5px;top:751.5px;width:70.5px;height:30px;background:#fff;border-radius:5px;border:1px solid #d1d5db;box-sizing:border-box;"></div>
<span class="t" style="left:3265.2px;top:759.6px;font-size:14px;color:#1f2937;letter-spacing:-0.179px;">Present</span>
<div class="b" style="left:3332.5px;top:751.5px;width:67.0px;height:30px;background:#fff;border-radius:5px;border:1px solid #d1d5db;box-sizing:border-box;"></div>
<span class="t" style="left:3344.5px;top:759.6px;font-size:14px;color:#1f2937;letter-spacing:-0.099px;">Absent</span>
<div class="b" style="left:3408px;top:751.5px;width:33px;height:30px;background:#fff;border-radius:5px;border:1px solid #d1d5db;box-sizing:border-box;"></div>
<svg class="b" style="left:3415.0px;top:757.5px;" width="19" height="19" viewBox="0 0 24 24" fill="#111827"><path d="M12 8c1.1 0 2-.9 2-2s-.9-2-2-2-2 .9-2 2 .9 2 2 2zm0 2c-1.1 0-2 .9-2 2s.9 2 2 2 2-.9 2-2-.9-2-2-2zm0 6c-1.1 0-2 .9-2 2s.9 2 2 2 2-.9 2-2-.9-2-2-2z"/></svg>
<div class="b" style="left:2234px;top:843px;width:1285px;height:1px;background:#e5e7eb;"></div>
<div class="b" style="left:2248px;top:801.5px;width:32px;height:32px;background:#1572c6;border-radius:16px;"></div>
<span class="t" style="left:2255.3px;top:811.6px;font-size:13px;color:#fff;font-weight:700;letter-spacing:-.6px;">CF</span>
<span class="t" style="left:2288.0px;top:810.7px;font-size:14px;color:#1f2937;letter-spacing:0.237px;">Casey Franco</span>
<span class="t" style="left:2469.0px;top:810.7px;font-size:14px;color:#1f2937;letter-spacing:-0.028px;">CLASSICAL MECHANICS - Classical</span>
<span class="t" style="left:2719.5px;top:810.7px;font-size:14px;color:#1f2937;letter-spacing:-0.239px;">Jamal John, Jam…</span>
<span class="t" style="left:2870.0px;top:810.7px;font-size:14px;color:#1f2937;letter-spacing:0.855px;">06:00 AM - 06:00 AM</span>
<div class="b" style="left:3051px;top:800px;width:173px;height:36px;background:#fff;border-radius:6px;border:1px solid #cbd5e1;box-sizing:border-box;"></div>
<span class="t" style="left:3065.0px;top:811.1px;font-size:14px;color:#6b7280;font-style:italic;letter-spacing:0.023px;">Add notes...</span>
<div class="b" style="left:3253.5px;top:802.5px;width:70.5px;height:30px;background:#fff;border-radius:5px;border:1px solid #d1d5db;box-sizing:border-box;"></div>
<span class="t" style="left:3265.2px;top:810.6px;font-size:14px;color:#1f2937;letter-spacing:-0.179px;">Present</span>
<div class="b" style="left:3332.5px;top:802.5px;width:67.0px;height:30px;background:#fff;border-radius:5px;border:1px solid #d1d5db;box-sizing:border-box;"></div>
<span class="t" style="left:3344.5px;top:810.6px;font-size:14px;color:#1f2937;letter-spacing:-0.099px;">Absent</span>
<div class="b" style="left:3408px;top:802.5px;width:33px;height:30px;background:#fff;border-radius:5px;border:1px solid #d1d5db;box-sizing:border-box;"></div>
<svg class="b" style="left:3415.0px;top:808.5px;" width="19" height="19" viewBox="0 0 24 24" fill="#111827"><path d="M12 8c1.1 0 2-.9 2-2s-.9-2-2-2-2 .9-2 2 .9 2 2 2zm0 2c-1.1 0-2 .9-2 2s.9 2 2 2 2-.9 2-2-.9-2-2-2zm0 6c-1.1 0-2 .9-2 2s.9 2 2 2 2-.9 2-2-.9-2-2-2z"/></svg>
<div class="b" style="left:2234px;top:894px;width:1285px;height:1px;background:#e5e7eb;"></div>
<div class="b" style="left:2248px;top:852.5px;width:32px;height:32px;background:#1572c6;border-radius:16px;"></div>
<span class="t" style="left:2254.2px;top:862.6px;font-size:13px;color:#fff;font-weight:700;letter-spacing:-.6px;">GR</span>
<span class="t" style="left:2288.0px;top:861.7px;font-size:14px;color:#1f2937;letter-spacing:0.219px;">Gabriel Roman</span>
<span class="t" style="left:2469.0px;top:861.7px;font-size:14px;color:#1f2937;letter-spacing:0.442px;">Information Security Latest Courses</span>
<span class="t" style="left:2719.5px;top:861.7px;font-size:14px;color:#1f2937;letter-spacing:-0.253px;">Jack Donovan, Ja…</span>
<span class="t" style="left:2870.0px;top:861.7px;font-size:14px;color:#1f2937;letter-spacing:0.855px;">06:00 AM - 06:00 AM</span>
<div class="b" style="left:3051px;top:851px;width:173px;height:36px;background:#fff;border-radius:6px;border:1px solid #cbd5e1;box-sizing:border-box;"></div>
<span class="t" style="left:3065.0px;top:862.1px;font-size:14px;color:#6b7280;font-style:italic;letter-spacing:0.023px;">Add notes...</span>
<div class="b" style="left:3253.5px;top:853.5px;width:70.5px;height:30px;background:#fff;border-radius:5px;border:1px solid #d1d5db;box-sizing:border-box;"></div>
<span class="t" style="left:3265.2px;top:861.6px;font-size:14px;color:#1f2937;letter-spacing:-0.179px;">Present</span>
<div class="b" style="left:3332.5px;top:853.5px;width:67.0px;height:30px;background:#fff;border-radius:5px;border:1px solid #d1d5db;box-sizing:border-box;"></div>
<span class="t" style="left:3344.5px;top:861.6px;font-size:14px;color:#1f2937;letter-spacing:-0.099px;">Absent</span>
<div class="b" style="left:3408px;top:853.5px;width:33px;height:30px;background:#fff;border-radius:5px;border:1px solid #d1d5db;box-sizing:border-box;"></div>
<svg class="b" style="left:3415.0px;top:859.5px;" width="19" height="19" viewBox="0 0 24 24" fill="#111827"><path d="M12 8c1.1 0 2-.9 2-2s-.9-2-2-2-2 .9-2 2 .9 2 2 2zm0 2c-1.1 0-2 .9-2 2s.9 2 2 2 2-.9 2-2-.9-2-2-2zm0 6c-1.1 0-2 .9-2 2s.9 2 2 2 2-.9 2-2-.9-2-2-2z"/></svg>
<div class="b" style="left:2234px;top:945px;width:1285px;height:1px;background:#e5e7eb;"></div>
<div class="b" style="left:2248px;top:903.5px;width:32px;height:32px;background:#1572c6;border-radius:16px;"></div>
<span class="t" style="left:2253.9px;top:913.6px;font-size:13px;color:#fff;font-weight:700;letter-spacing:-.6px;">WL</span>
<span class="t" style="left:2288.0px;top:912.7px;font-size:14px;color:#1f2937;letter-spacing:0.331px;">Winifred Lowe</span>
<span class="t" style="left:2469.0px;top:912.7px;font-size:14px;color:#1f2937;letter-spacing:0.442px;">Information Security Latest Courses</span>
<span class="t" style="left:2719.5px;top:912.7px;font-size:14px;color:#1f2937;letter-spacing:-0.253px;">Jack Donovan, Ja…</span>
<span class="t" style="left:2870.0px;top:912.7px;font-size:14px;color:#1f2937;letter-spacing:0.855px;">06:00 AM - 06:00 AM</span>
<div class="b" style="left:3051px;top:902px;width:173px;height:36px;background:#fff;border-radius:6px;border:1px solid #cbd5e1;box-sizing:border-box;"></div>
<span class="t" style="left:3065.0px;top:913.1px;font-size:14px;color:#6b7280;font-style:italic;letter-spacing:0.023px;">Add notes...</span>
<div class="b" style="left:3253.5px;top:904.5px;width:70.5px;height:30px;background:#fff;border-radius:5px;border:1px solid #d1d5db;box-sizing:border-box;"></div>
<span class="t" style="left:3265.2px;top:912.6px;font-size:14px;color:#1f2937;letter-spacing:-0.179px;">Present</span>
<div class="b" style="left:3332.5px;top:904.5px;width:67.0px;height:30px;background:#fff;border-radius:5px;border:1px solid #d1d5db;box-sizing:border-box;"></div>
<span class="t" style="left:3344.5px;top:912.6px;font-size:14px;color:#1f2937;letter-spacing:-0.099px;">Absent</span>
<div class="b" style="left:3408px;top:904.5px;width:33px;height:30px;background:#fff;border-radius:5px;border:1px solid #d1d5db;box-sizing:border-box;"></div>
<svg class="b" style="left:3415.0px;top:910.5px;" width="19" height="19" viewBox="0 0 24 24" fill="#111827"><path d="M12 8c1.1 0 2-.9 2-2s-.9-2-2-2-2 .9-2 2 .9 2 2 2zm0 2c-1.1 0-2 .9-2 2s.9 2 2 2 2-.9 2-2-.9-2-2-2zm0 6c-1.1 0-2 .9-2 2s.9 2 2 2 2-.9 2-2-.9-2-2-2z"/></svg>
<div class="b" style="left:2234px;top:996px;width:1285px;height:1px;background:#e5e7eb;"></div>
<div class="b" style="left:2248px;top:954.5px;width:32px;height:32px;background:#1572c6;border-radius:16px;"></div>
<span class="t" style="left:2255.0px;top:964.6px;font-size:13px;color:#fff;font-weight:700;letter-spacing:-.6px;">BS</span>
<span class="t" style="left:2288.0px;top:963.7px;font-size:14px;color:#1f2937;letter-spacing:0.551px;">Brent Sears</span>
<span class="t" style="left:2469.0px;top:963.7px;font-size:14px;color:#1f2937;letter-spacing:0.442px;">Information Security Latest Courses</span>
<span class="t" style="left:2719.5px;top:963.7px;font-size:14px;color:#1f2937;letter-spacing:-0.253px;">Jack Donovan, Ja…</span>
<span class="t" style="left:2870.0px;top:963.7px;font-size:14px;color:#1f2937;letter-spacing:0.855px;">06:00 AM - 06:00 AM</span>
<div class="b" style="left:3051px;top:953px;width:173px;height:36px;background:#fff;border-radius:6px;border:1px solid #cbd5e1;box-sizing:border-box;"></div>
<span class="t" style="left:3065.0px;top:964.1px;font-size:14px;color:#6b7280;font-style:italic;letter-spacing:0.023px;">Add notes...</span>
<div class="b" style="left:3253.5px;top:955.5px;width:70.5px;height:30px;background:#fff;border-radius:5px;border:1px solid #d1d5db;box-sizing:border-box;"></div>
<span class="t" style="left:3265.2px;top:963.6px;font-size:14px;color:#1f2937;letter-spacing:-0.179px;">Present</span>
<div class="b" style="left:3332.5px;top:955.5px;width:67.0px;height:30px;background:#fff;border-radius:5px;border:1px solid #d1d5db;box-sizing:border-box;"></div>
<span class="t" style="left:3344.5px;top:963.6px;font-size:14px;color:#1f2937;letter-spacing:-0.099px;">Absent</span>
<div class="b" style="left:3408px;top:955.5px;width:33px;height:30px;background:#fff;border-radius:5px;border:1px solid #d1d5db;box-sizing:border-box;"></div>
<svg class="b" style="left:3415.0px;top:961.5px;" width="19" height="19" viewBox="0 0 24 24" fill="#111827"><path d="M12 8c1.1 0 2-.9 2-2s-.9-2-2-2-2 .9-2 2 .9 2 2 2zm0 2c-1.1 0-2 .9-2 2s.9 2 2 2 2-.9 2-2-.9-2-2-2zm0 6c-1.1 0-2 .9-2 2s.9 2 2 2 2-.9 2-2-.9-2-2-2z"/></svg>
<div class="b" style="left:2234px;top:1047px;width:1285px;height:1px;background:#e5e7eb;"></div>
<div class="b" style="left:2248px;top:1005.5px;width:32px;height:32px;background:#1572c6;border-radius:16px;"></div>
<span class="t" style="left:2254.6px;top:1015.6px;font-size:13px;color:#fff;font-weight:700;letter-spacing:-.6px;">KA</span>
<span class="t" style="left:2288.0px;top:1014.7px;font-size:14px;color:#1f2937;letter-spacing:0.277px;">Kareem Avery</span>
<span class="t" style="left:2469.0px;top:1014.7px;font-size:14px;color:#1f2937;letter-spacing:0.442px;">Information Security Latest Courses</span>
<span class="t" style="left:2719.5px;top:1014.7px;font-size:14px;color:#1f2937;letter-spacing:-0.253px;">Jack Donovan, Ja…</span>
<span class="t" style="left:2870.0px;top:1014.7px;font-size:14px;color:#1f2937;letter-spacing:0.855px;">06:00 AM - 06:00 AM</span>
<div class="b" style="left:3051px;top:1004px;width:173px;height:36px;background:#fff;border-radius:6px;border:1px solid #cbd5e1;box-sizing:border-box;"></div>
<span class="t" style="left:3065.0px;top:1015.1px;font-size:14px;color:#6b7280;font-style:italic;letter-spacing:0.023px;">Add notes...</span>
<div class="b" style="left:3253.5px;top:1006.5px;width:70.5px;height:30px;background:#fff;border-radius:5px;border:1px solid #d1d5db;box-sizing:border-box;"></div>
<span class="t" style="left:3265.2px;top:1014.6px;font-size:14px;color:#1f2937;letter-spacing:-0.179px;">Present</span>
<div class="b" style="left:3332.5px;top:1006.5px;width:67.0px;height:30px;background:#fff;border-radius:5px;border:1px solid #d1d5db;box-sizing:border-box;"></div>
<span class="t" style="left:3344.5px;top:1014.6px;font-size:14px;color:#1f2937;letter-spacing:-0.099px;">Absent</span>
<div class="b" style="left:3408px;top:1006.5px;width:33px;height:30px;background:#fff;border-radius:5px;border:1px solid #d1d5db;box-sizing:border-box;"></div>
<svg class="b" style="left:3415.0px;top:1012.5px;" width="19" height="19" viewBox="0 0 24 24" fill="#111827"><path d="M12 8c1.1 0 2-.9 2-2s-.9-2-2-2-2 .9-2 2 .9 2 2 2zm0 2c-1.1 0-2 .9-2 2s.9 2 2 2 2-.9 2-2-.9-2-2-2zm0 6c-1.1 0-2 .9-2 2s.9 2 2 2 2-.9 2-2-.9-2-2-2z"/></svg>
<div class="b" style="left:2454px;top:439.5px;width:1px;height:580px;background:#e5e7eb;box-shadow:2px 0 4px rgba(0,0,0,.06);"></div>
<div class="b" style="left:3238px;top:439.5px;width:1px;height:580px;background:#e5e7eb;box-shadow:-2px 0 4px rgba(0,0,0,.06);"></div>
<div class="b" style="left:3520px;top:439px;width:6px;height:46px;background:#cdcdcd;border-radius:3px;"></div>
<div class="b" style="left:2909.5px;top:700px;width:160.5px;height:30.5px;background:#fff;border:1.300px solid #2a2a2a;box-sizing:border-box;"></div>
<span class="t" style="left:2919.0px;top:707.5px;font-size:15px;color:#444;letter-spacing:-0.058px;">06:00 AM - 06:00 AM</span>
<div class="b" style="left:2209.8px;top:379.6px;width:1307.7px;height:198.6px;border-radius:3px;border:4.2px solid #ff0000;box-sizing:border-box;"></div>
<svg class="b" style="left:1920px;top:150px;pointer-events:none" width="1614" height="300" viewBox="1920 150 1614 300"><g stroke="#ff1414" stroke-width="3.700" fill="#ff1414" stroke-linecap="round"><path d="M2141 276.500 L2036 336"/><path d="M2022.300 343.900 L2035 330.400 L2041.600 340z" stroke-width="1" stroke-linejoin="round"/><path d="M3392.300 344.800 L3426.500 276.500"/><path d="M3434.400 261 L3420.500 275 L3430.400 280.300z" stroke-width="1" stroke-linejoin="round"/></g></svg>
<div class="b" style="left:1920px;top:1019.5px;width:1614px;height:1px;background:#9fb3bd;"></div>
<div class="b" style="left:1920px;top:1020.3px;width:1614px;height:4px;background:linear-gradient(90deg,#b9d3e0 0%,#d9dccf 10%,#eadfbd 35%,#e6dcc0 60%,#c9cdbd 85%,#aab5b0 100%);"></div>
</body></html>
